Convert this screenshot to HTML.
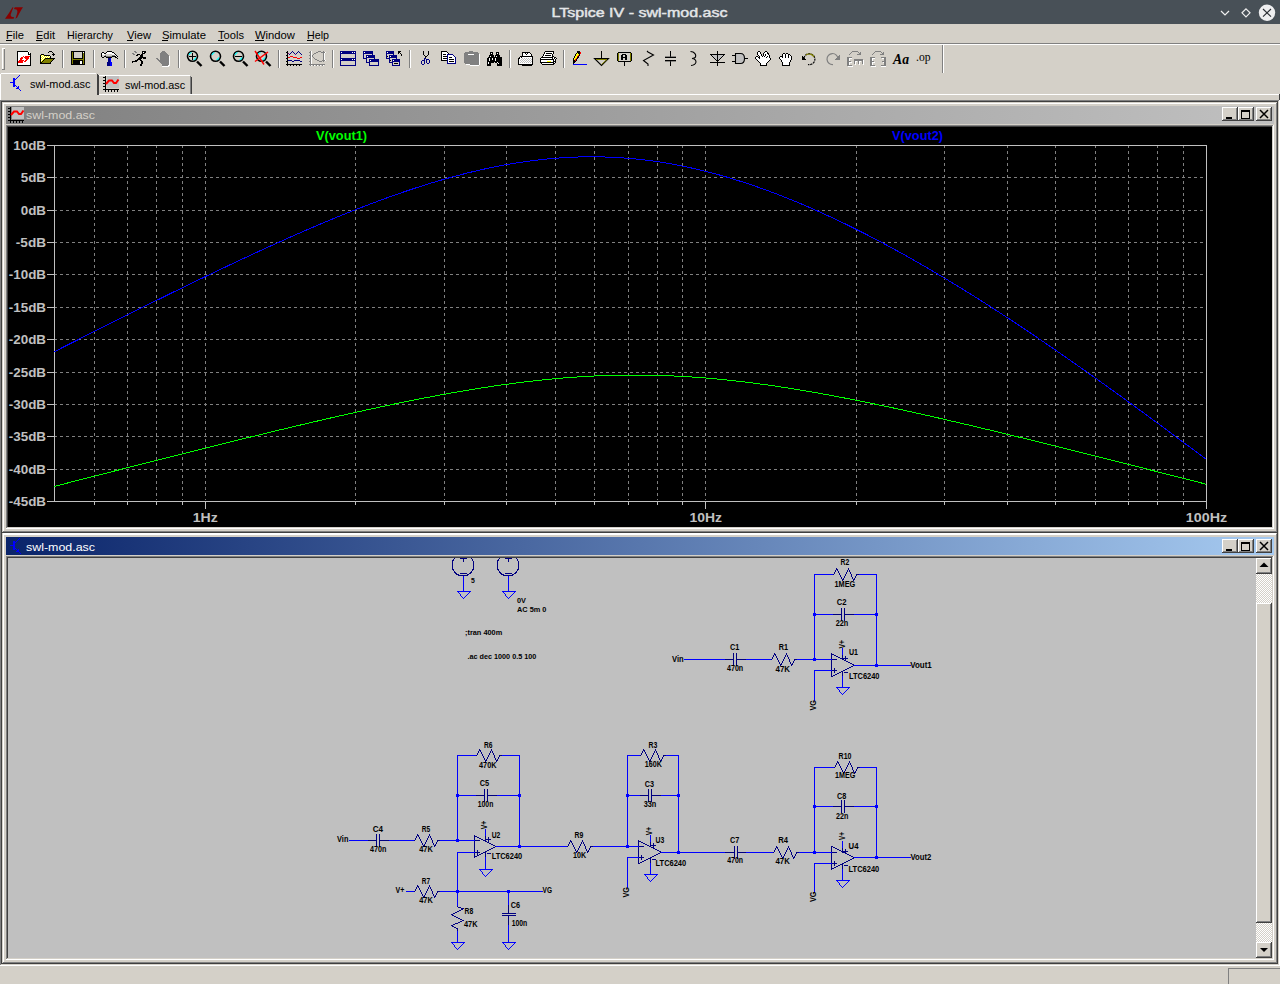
<!DOCTYPE html><html><head><meta charset="utf-8"><style>html,body{margin:0;padding:0;background:#d4d0c8;overflow:hidden}svg{display:block}text{font-family:'Liberation Sans',sans-serif}</style></head><body>
<svg width="1280" height="984" viewBox="0 0 1280 984" shape-rendering="crispEdges">
<rect x="0" y="0" width="1280" height="984" fill="#d4d0c8"/>
<rect x="0" y="0" width="1280" height="24" fill="#485057"/>
<path d="M5,18.8 L9,13 L12.5,7.2 L13.4,7.6 L11.6,12 L10.6,15 L11.2,16.5 L12.5,17 L14.2,17.3 L13.6,18.8 Z M14,8.2 L15,7.2 L23,7.2 L21.5,9.5 L19.5,13 L17.2,17.5 L15.4,18.8 L16,17 L17.2,13 L17.4,11 L16.5,9.6 L14.5,9.3 Z" fill="#880000" shape-rendering="geometricPrecision"/>
<text x="639.5" y="17" font-size="13" fill="#e4e6e8" font-weight="normal" text-anchor="middle" textLength="176" lengthAdjust="spacingAndGlyphs" stroke="#e4e6e8" stroke-width="0.45">LTspice IV - swl-mod.asc</text>
<path d="M1221,11 L1225,15 L1229,11" stroke="#f0f0f0" stroke-width="1.2" fill="none" shape-rendering="geometricPrecision"/>
<path d="M1246,8.8 L1250,12.8 L1246,16.8 L1242,12.8 Z" stroke="#f0f0f0" stroke-width="1.2" fill="none" shape-rendering="geometricPrecision"/>
<circle cx="1267" cy="12.8" r="8.2" fill="#eeeef0" shape-rendering="geometricPrecision"/>
<path d="M1263,9 L1271,16.7 M1271,9 L1263,16.7" stroke="#2a2d33" stroke-width="1.1" shape-rendering="geometricPrecision"/>
<text x="6" y="39" font-size="11.5" fill="#000" font-weight="normal" text-anchor="start" textLength="18" lengthAdjust="spacingAndGlyphs" shape-rendering="geometricPrecision">File</text>
<rect x="6" y="40" width="6" height="1" fill="#000"/>
<text x="36" y="39" font-size="11.5" fill="#000" font-weight="normal" text-anchor="start" textLength="19" lengthAdjust="spacingAndGlyphs" shape-rendering="geometricPrecision">Edit</text>
<rect x="36" y="40" width="6" height="1" fill="#000"/>
<text x="67" y="39" font-size="11.5" fill="#000" font-weight="normal" text-anchor="start" textLength="46" lengthAdjust="spacingAndGlyphs" shape-rendering="geometricPrecision">Hierarchy</text>
<rect x="78" y="40" width="2" height="1" fill="#000"/>
<text x="127" y="39" font-size="11.5" fill="#000" font-weight="normal" text-anchor="start" textLength="24" lengthAdjust="spacingAndGlyphs" shape-rendering="geometricPrecision">View</text>
<rect x="127" y="40" width="6" height="1" fill="#000"/>
<text x="162" y="39" font-size="11.5" fill="#000" font-weight="normal" text-anchor="start" textLength="44" lengthAdjust="spacingAndGlyphs" shape-rendering="geometricPrecision">Simulate</text>
<rect x="162" y="40" width="6" height="1" fill="#000"/>
<text x="218" y="39" font-size="11.5" fill="#000" font-weight="normal" text-anchor="start" textLength="26" lengthAdjust="spacingAndGlyphs" shape-rendering="geometricPrecision">Tools</text>
<rect x="218" y="40" width="6" height="1" fill="#000"/>
<text x="255" y="39" font-size="11.5" fill="#000" font-weight="normal" text-anchor="start" textLength="40" lengthAdjust="spacingAndGlyphs" shape-rendering="geometricPrecision">Window</text>
<rect x="255" y="40" width="9" height="1" fill="#000"/>
<text x="307" y="39" font-size="11.5" fill="#000" font-weight="normal" text-anchor="start" textLength="22" lengthAdjust="spacingAndGlyphs" shape-rendering="geometricPrecision">Help</text>
<rect x="307" y="40" width="6" height="1" fill="#000"/>
<rect x="0" y="43" width="1280" height="1" fill="#808080"/>
<rect x="0" y="44" width="1280" height="1" fill="#ffffff"/>
<rect x="2" y="48" width="1" height="22" fill="#ffffff"/>
<rect x="3" y="48" width="1" height="22" fill="#d4d0c8"/>
<rect x="4" y="48" width="1" height="22" fill="#808080"/>
<rect x="2" y="48" width="3" height="1" fill="#ffffff"/>
<rect x="2" y="69" width="3" height="1" fill="#808080"/>
<rect x="62" y="50" width="1" height="18" fill="#808080"/>
<rect x="63" y="50" width="1" height="18" fill="#ffffff"/>
<rect x="93" y="50" width="1" height="18" fill="#808080"/>
<rect x="94" y="50" width="1" height="18" fill="#ffffff"/>
<rect x="124" y="50" width="1" height="18" fill="#808080"/>
<rect x="125" y="50" width="1" height="18" fill="#ffffff"/>
<rect x="178" y="50" width="1" height="18" fill="#808080"/>
<rect x="179" y="50" width="1" height="18" fill="#ffffff"/>
<rect x="278" y="50" width="1" height="18" fill="#808080"/>
<rect x="279" y="50" width="1" height="18" fill="#ffffff"/>
<rect x="332" y="50" width="1" height="18" fill="#808080"/>
<rect x="333" y="50" width="1" height="18" fill="#ffffff"/>
<rect x="409" y="50" width="1" height="18" fill="#808080"/>
<rect x="410" y="50" width="1" height="18" fill="#ffffff"/>
<rect x="509" y="50" width="1" height="18" fill="#808080"/>
<rect x="510" y="50" width="1" height="18" fill="#ffffff"/>
<rect x="563" y="50" width="1" height="18" fill="#808080"/>
<rect x="564" y="50" width="1" height="18" fill="#ffffff"/>
<rect x="942" y="45" width="1" height="28" fill="#808080"/>
<rect x="943" y="45" width="1" height="28" fill="#ffffff"/>
<path fill="#000000" d="M17 51h11v1h-11z"/>
<path fill="#ffffff" d="M28 51h1v1h-1z"/>
<path fill="#000000" d="M17 52h1v1h-1z"/>
<path fill="#ffffff" d="M18 52h10v1h-10z"/>
<path fill="#000000" d="M28 52h1v1h-1z"/>
<path fill="#ffffff" d="M29 52h1v1h-1z"/>
<path fill="#000000" d="M17 53h1v1h-1z"/>
<path fill="#ffffff" d="M18 53h10v1h-10z"/>
<path fill="#000000" d="M28 53h1v1h-1z"/>
<path fill="#ffffff" d="M29 53h1v1h-1z"/>
<path fill="#000000" d="M30 53h1v1h-1z"/>
<path fill="#000000" d="M17 54h1v1h-1z"/>
<path fill="#ffffff" d="M18 54h10v1h-10z"/>
<path fill="#000000" d="M28 54h3v1h-3z"/>
<path fill="#000000" d="M17 55h1v1h-1z"/>
<path fill="#ffffff" d="M18 55h12v1h-12z"/>
<path fill="#000000" d="M30 55h1v1h-1z"/>
<path fill="#000000" d="M17 56h1v1h-1z"/>
<path fill="#ffffff" d="M18 56h5v1h-5z"/>
<path fill="#ff0000" d="M23 56h1v1h-1z"/>
<path fill="#ffffff" d="M24 56h1v1h-1z"/>
<path fill="#ff0000" d="M25 56h5v1h-5z"/>
<path fill="#000000" d="M30 56h1v1h-1z"/>
<path fill="#000000" d="M17 57h1v1h-1z"/>
<path fill="#ffffff" d="M18 57h3v1h-3z"/>
<path fill="#ff0000" d="M21 57h2v1h-2z"/>
<path fill="#ffffff" d="M23 57h1v1h-1z"/>
<path fill="#ff0000" d="M24 57h5v1h-5z"/>
<path fill="#ffffff" d="M29 57h1v1h-1z"/>
<path fill="#000000" d="M30 57h1v1h-1z"/>
<path fill="#000000" d="M17 58h1v1h-1z"/>
<path fill="#ffffff" d="M18 58h2v1h-2z"/>
<path fill="#ff0000" d="M20 58h3v1h-3z"/>
<path fill="#ffffff" d="M23 58h2v1h-2z"/>
<path fill="#ff0000" d="M25 58h4v1h-4z"/>
<path fill="#ffffff" d="M29 58h1v1h-1z"/>
<path fill="#000000" d="M30 58h1v1h-1z"/>
<path fill="#000000" d="M17 59h1v1h-1z"/>
<path fill="#ffffff" d="M18 59h2v1h-2z"/>
<path fill="#ff0000" d="M20 59h2v1h-2z"/>
<path fill="#ffffff" d="M22 59h4v1h-4z"/>
<path fill="#ff0000" d="M26 59h2v1h-2z"/>
<path fill="#ffffff" d="M28 59h2v1h-2z"/>
<path fill="#000000" d="M30 59h1v1h-1z"/>
<path fill="#000000" d="M17 60h1v1h-1z"/>
<path fill="#ffffff" d="M18 60h1v1h-1z"/>
<path fill="#ff0000" d="M19 60h5v1h-5z"/>
<path fill="#ffffff" d="M24 60h1v1h-1z"/>
<path fill="#ff0000" d="M25 60h2v1h-2z"/>
<path fill="#ffffff" d="M27 60h3v1h-3z"/>
<path fill="#000000" d="M30 60h1v1h-1z"/>
<path fill="#000000" d="M17 61h1v1h-1z"/>
<path fill="#ff0000" d="M18 61h5v1h-5z"/>
<path fill="#ffffff" d="M23 61h1v1h-1z"/>
<path fill="#ff0000" d="M24 61h2v1h-2z"/>
<path fill="#ffffff" d="M26 61h4v1h-4z"/>
<path fill="#000000" d="M30 61h1v1h-1z"/>
<path fill="#000000" d="M17 62h1v1h-1z"/>
<path fill="#ff0000" d="M18 62h5v1h-5z"/>
<path fill="#ffffff" d="M23 62h7v1h-7z"/>
<path fill="#000000" d="M30 62h1v1h-1z"/>
<path fill="#000000" d="M17 63h1v1h-1z"/>
<path fill="#ffffff" d="M18 63h12v1h-12z"/>
<path fill="#000000" d="M30 63h1v1h-1z"/>
<path fill="#000000" d="M17 64h1v1h-1z"/>
<path fill="#ffffff" d="M18 64h12v1h-12z"/>
<path fill="#000000" d="M30 64h1v1h-1z"/>
<path fill="#000000" d="M17 65h14v1h-14z"/>
<path fill="#000000" d="M49 51h3v1h-3z"/>
<path fill="#000000" d="M48 52h1v1h-1z"/>
<path fill="#000000" d="M52 52h1v1h-1z"/>
<path fill="#000000" d="M53 53h1v1h-1z"/>
<path fill="#000000" d="M41 54h3v1h-3z"/>
<path fill="#000000" d="M52 54h3v1h-3z"/>
<path fill="#000000" d="M40 55h1v1h-1z"/>
<path fill="#ffff00" d="M41 55h1v1h-1z"/>
<path fill="#ffffff" d="M42 55h1v1h-1z"/>
<path fill="#ffff00" d="M43 55h1v1h-1z"/>
<path fill="#000000" d="M44 55h6v1h-6z"/>
<path fill="#000000" d="M53 55h1v1h-1z"/>
<path fill="#000000" d="M40 56h1v1h-1z"/>
<path fill="#ffffff" d="M41 56h1v1h-1z"/>
<path fill="#ffff00" d="M42 56h1v1h-1z"/>
<path fill="#ffffff" d="M43 56h1v1h-1z"/>
<path fill="#ffff00" d="M44 56h1v1h-1z"/>
<path fill="#ffffff" d="M45 56h1v1h-1z"/>
<path fill="#ffff00" d="M46 56h1v1h-1z"/>
<path fill="#ffffff" d="M47 56h1v1h-1z"/>
<path fill="#ffff00" d="M48 56h1v1h-1z"/>
<path fill="#ffffff" d="M49 56h1v1h-1z"/>
<path fill="#000000" d="M50 56h1v1h-1z"/>
<path fill="#000000" d="M40 57h1v1h-1z"/>
<path fill="#ffff00" d="M41 57h1v1h-1z"/>
<path fill="#ffffff" d="M42 57h1v1h-1z"/>
<path fill="#ffff00" d="M43 57h1v1h-1z"/>
<path fill="#ffffff" d="M44 57h1v1h-1z"/>
<path fill="#ffff00" d="M45 57h1v1h-1z"/>
<path fill="#ffffff" d="M46 57h1v1h-1z"/>
<path fill="#ffff00" d="M47 57h1v1h-1z"/>
<path fill="#ffffff" d="M48 57h1v1h-1z"/>
<path fill="#ffff00" d="M49 57h1v1h-1z"/>
<path fill="#000000" d="M50 57h1v1h-1z"/>
<path fill="#000000" d="M40 58h1v1h-1z"/>
<path fill="#ffffff" d="M41 58h1v1h-1z"/>
<path fill="#ffff00" d="M42 58h1v1h-1z"/>
<path fill="#ffffff" d="M43 58h1v1h-1z"/>
<path fill="#ffff00" d="M44 58h1v1h-1z"/>
<path fill="#000000" d="M45 58h10v1h-10z"/>
<path fill="#000000" d="M40 59h1v1h-1z"/>
<path fill="#ffff00" d="M41 59h1v1h-1z"/>
<path fill="#ffffff" d="M42 59h1v1h-1z"/>
<path fill="#ffff00" d="M43 59h1v1h-1z"/>
<path fill="#000000" d="M44 59h1v1h-1z"/>
<path fill="#808000" d="M45 59h8v1h-8z"/>
<path fill="#000000" d="M53 59h1v1h-1z"/>
<path fill="#000000" d="M40 60h1v1h-1z"/>
<path fill="#ffffff" d="M41 60h1v1h-1z"/>
<path fill="#ffff00" d="M42 60h1v1h-1z"/>
<path fill="#000000" d="M43 60h1v1h-1z"/>
<path fill="#808000" d="M44 60h8v1h-8z"/>
<path fill="#000000" d="M52 60h1v1h-1z"/>
<path fill="#000000" d="M40 61h1v1h-1z"/>
<path fill="#ffff00" d="M41 61h1v1h-1z"/>
<path fill="#000000" d="M42 61h1v1h-1z"/>
<path fill="#808000" d="M43 61h8v1h-8z"/>
<path fill="#000000" d="M51 61h1v1h-1z"/>
<path fill="#000000" d="M40 62h2v1h-2z"/>
<path fill="#808000" d="M42 62h8v1h-8z"/>
<path fill="#000000" d="M50 62h1v1h-1z"/>
<path fill="#000000" d="M40 63h11v1h-11z"/>
<path fill="#000000" d="M71 51h14v1h-14z"/>
<path fill="#000000" d="M71 52h1v1h-1z"/>
<path fill="#808000" d="M72 52h1v1h-1z"/>
<path fill="#000000" d="M73 52h1v1h-1z"/>
<path fill="#d4d0c8" d="M74 52h8v1h-8z"/>
<path fill="#000000" d="M82 52h1v1h-1z"/>
<path fill="#ffffff" d="M83 52h1v1h-1z"/>
<path fill="#000000" d="M84 52h1v1h-1z"/>
<path fill="#000000" d="M71 53h1v1h-1z"/>
<path fill="#808000" d="M72 53h1v1h-1z"/>
<path fill="#000000" d="M73 53h1v1h-1z"/>
<path fill="#d4d0c8" d="M74 53h8v1h-8z"/>
<path fill="#000000" d="M82 53h1v1h-1z"/>
<path fill="#808000" d="M83 53h1v1h-1z"/>
<path fill="#000000" d="M84 53h1v1h-1z"/>
<path fill="#000000" d="M71 54h1v1h-1z"/>
<path fill="#808000" d="M72 54h1v1h-1z"/>
<path fill="#000000" d="M73 54h1v1h-1z"/>
<path fill="#d4d0c8" d="M74 54h8v1h-8z"/>
<path fill="#000000" d="M82 54h1v1h-1z"/>
<path fill="#808000" d="M83 54h1v1h-1z"/>
<path fill="#000000" d="M84 54h1v1h-1z"/>
<path fill="#000000" d="M71 55h1v1h-1z"/>
<path fill="#808000" d="M72 55h1v1h-1z"/>
<path fill="#000000" d="M73 55h1v1h-1z"/>
<path fill="#d4d0c8" d="M74 55h8v1h-8z"/>
<path fill="#000000" d="M82 55h1v1h-1z"/>
<path fill="#808000" d="M83 55h1v1h-1z"/>
<path fill="#000000" d="M84 55h1v1h-1z"/>
<path fill="#000000" d="M71 56h1v1h-1z"/>
<path fill="#808000" d="M72 56h1v1h-1z"/>
<path fill="#000000" d="M73 56h1v1h-1z"/>
<path fill="#d4d0c8" d="M74 56h8v1h-8z"/>
<path fill="#000000" d="M82 56h1v1h-1z"/>
<path fill="#808000" d="M83 56h1v1h-1z"/>
<path fill="#000000" d="M84 56h1v1h-1z"/>
<path fill="#000000" d="M71 57h1v1h-1z"/>
<path fill="#808000" d="M72 57h1v1h-1z"/>
<path fill="#000000" d="M73 57h1v1h-1z"/>
<path fill="#d4d0c8" d="M74 57h8v1h-8z"/>
<path fill="#000000" d="M82 57h1v1h-1z"/>
<path fill="#808000" d="M83 57h1v1h-1z"/>
<path fill="#000000" d="M84 57h1v1h-1z"/>
<path fill="#000000" d="M71 58h1v1h-1z"/>
<path fill="#808000" d="M72 58h1v1h-1z"/>
<path fill="#000000" d="M73 58h10v1h-10z"/>
<path fill="#808000" d="M83 58h1v1h-1z"/>
<path fill="#000000" d="M84 58h1v1h-1z"/>
<path fill="#000000" d="M71 59h1v1h-1z"/>
<path fill="#808000" d="M72 59h12v1h-12z"/>
<path fill="#000000" d="M84 59h1v1h-1z"/>
<path fill="#000000" d="M71 60h1v1h-1z"/>
<path fill="#808000" d="M72 60h1v1h-1z"/>
<path fill="#000000" d="M73 60h10v1h-10z"/>
<path fill="#808000" d="M83 60h1v1h-1z"/>
<path fill="#000000" d="M84 60h1v1h-1z"/>
<path fill="#000000" d="M71 61h1v1h-1z"/>
<path fill="#808000" d="M72 61h1v1h-1z"/>
<path fill="#000000" d="M73 61h7v1h-7z"/>
<path fill="#ffffff" d="M80 61h2v1h-2z"/>
<path fill="#000000" d="M82 61h1v1h-1z"/>
<path fill="#808000" d="M83 61h1v1h-1z"/>
<path fill="#000000" d="M84 61h1v1h-1z"/>
<path fill="#000000" d="M71 62h1v1h-1z"/>
<path fill="#808000" d="M72 62h1v1h-1z"/>
<path fill="#000000" d="M73 62h7v1h-7z"/>
<path fill="#ffffff" d="M80 62h2v1h-2z"/>
<path fill="#000000" d="M82 62h1v1h-1z"/>
<path fill="#808000" d="M83 62h1v1h-1z"/>
<path fill="#000000" d="M84 62h1v1h-1z"/>
<path fill="#000000" d="M71 63h1v1h-1z"/>
<path fill="#808000" d="M72 63h1v1h-1z"/>
<path fill="#000000" d="M73 63h7v1h-7z"/>
<path fill="#ffffff" d="M80 63h2v1h-2z"/>
<path fill="#000000" d="M82 63h1v1h-1z"/>
<path fill="#808000" d="M83 63h1v1h-1z"/>
<path fill="#000000" d="M84 63h1v1h-1z"/>
<path fill="#000000" d="M71 64h14v1h-14z"/>
<path fill="#000000" d="M107 51h5v1h-5z"/>
<path fill="#000000" d="M102 52h2v1h-2z"/>
<path fill="#000000" d="M106 52h1v1h-1z"/>
<path fill="#ffffff" d="M107 52h5v1h-5z"/>
<path fill="#000000" d="M112 52h2v1h-2z"/>
<path fill="#000000" d="M101 53h1v1h-1z"/>
<path fill="#ffffff" d="M102 53h2v1h-2z"/>
<path fill="#000000" d="M104 53h2v1h-2z"/>
<path fill="#ffffff" d="M106 53h8v1h-8z"/>
<path fill="#000000" d="M114 53h1v1h-1z"/>
<path fill="#000000" d="M101 54h1v1h-1z"/>
<path fill="#ffffff" d="M102 54h3v1h-3z"/>
<path fill="#d4d0c8" d="M105 54h7v1h-7z"/>
<path fill="#ffffff" d="M112 54h3v1h-3z"/>
<path fill="#000000" d="M115 54h1v1h-1z"/>
<path fill="#000000" d="M101 55h1v1h-1z"/>
<path fill="#d4d0c8" d="M102 55h3v1h-3z"/>
<path fill="#808080" d="M105 55h1v1h-1z"/>
<path fill="#d4d0c8" d="M106 55h6v1h-6z"/>
<path fill="#808080" d="M112 55h3v1h-3z"/>
<path fill="#ffffff" d="M115 55h1v1h-1z"/>
<path fill="#000000" d="M116 55h1v1h-1z"/>
<path fill="#000000" d="M101 56h1v1h-1z"/>
<path fill="#d4d0c8" d="M102 56h2v1h-2z"/>
<path fill="#000000" d="M104 56h2v1h-2z"/>
<path fill="#808080" d="M106 56h6v1h-6z"/>
<path fill="#000000" d="M112 56h4v1h-4z"/>
<path fill="#ffffff" d="M116 56h1v1h-1z"/>
<path fill="#000000" d="M117 56h1v1h-1z"/>
<path fill="#000000" d="M102 57h2v1h-2z"/>
<path fill="#000000" d="M106 57h6v1h-6z"/>
<path fill="#000000" d="M115 57h2v1h-2z"/>
<path fill="#000080" d="M108 58h2v1h-2z"/>
<path fill="#0000ff" d="M110 58h1v1h-1z"/>
<path fill="#000000" d="M117 58h1v1h-1z"/>
<path fill="#000080" d="M108 59h2v1h-2z"/>
<path fill="#0000ff" d="M110 59h1v1h-1z"/>
<path fill="#000080" d="M108 60h2v1h-2z"/>
<path fill="#0000ff" d="M110 60h1v1h-1z"/>
<path fill="#000080" d="M108 61h2v1h-2z"/>
<path fill="#0000ff" d="M110 61h1v1h-1z"/>
<path fill="#000080" d="M107 62h3v1h-3z"/>
<path fill="#0000ff" d="M110 62h2v1h-2z"/>
<path fill="#000080" d="M107 63h3v1h-3z"/>
<path fill="#0000ff" d="M110 63h2v1h-2z"/>
<path fill="#000080" d="M107 64h3v1h-3z"/>
<path fill="#0000ff" d="M110 64h2v1h-2z"/>
<path fill="#000080" d="M107 65h3v1h-3z"/>
<path fill="#0000ff" d="M110 65h2v1h-2z"/>
<path fill="#808080" d="M134 51h2v1h-2z"/>
<path fill="#000000" d="M142 51h4v1h-4z"/>
<path fill="#808080" d="M135 52h2v1h-2z"/>
<path fill="#000000" d="M142 52h1v1h-1z"/>
<path fill="#ffffff" d="M143 52h1v1h-1z"/>
<path fill="#000000" d="M144 52h2v1h-2z"/>
<path fill="#808080" d="M132 53h2v1h-2z"/>
<path fill="#000000" d="M142 53h3v1h-3z"/>
<path fill="#808080" d="M133 54h2v1h-2z"/>
<path fill="#000000" d="M137 54h3v1h-3z"/>
<path fill="#000000" d="M141 54h2v1h-2z"/>
<path fill="#000000" d="M136 55h2v1h-2z"/>
<path fill="#000000" d="M140 55h3v1h-3z"/>
<path fill="#000000" d="M140 56h3v1h-3z"/>
<path fill="#000000" d="M139 57h7v1h-7z"/>
<path fill="#000000" d="M138 58h4v1h-4z"/>
<path fill="#000000" d="M143 58h3v1h-3z"/>
<path fill="#000000" d="M137 59h4v1h-4z"/>
<path fill="#000000" d="M135 60h3v1h-3z"/>
<path fill="#000000" d="M140 60h2v1h-2z"/>
<path fill="#000000" d="M132 61h5v1h-5z"/>
<path fill="#000000" d="M141 61h2v1h-2z"/>
<path fill="#000000" d="M132 62h1v1h-1z"/>
<path fill="#000000" d="M141 62h2v1h-2z"/>
<path fill="#000000" d="M141 63h2v1h-2z"/>
<path fill="#000000" d="M140 64h2v1h-2z"/>
<path fill="#000000" d="M140 65h2v1h-2z"/>
<path fill="#808080" d="M162 51h3v1h-3z"/>
<path fill="#808080" d="M161 52h5v1h-5z"/>
<path fill="#808080" d="M160 53h7v1h-7z"/>
<path fill="#808080" d="M160 54h8v1h-8z"/>
<path fill="#808080" d="M160 55h9v1h-9z"/>
<path fill="#808080" d="M160 56h9v1h-9z"/>
<path fill="#ffffff" d="M169 56h1v1h-1z"/>
<path fill="#808080" d="M160 57h9v1h-9z"/>
<path fill="#ffffff" d="M169 57h1v1h-1z"/>
<path fill="#808080" d="M156 58h2v1h-2z"/>
<path fill="#808080" d="M160 58h9v1h-9z"/>
<path fill="#ffffff" d="M169 58h1v1h-1z"/>
<path fill="#808080" d="M157 59h2v1h-2z"/>
<path fill="#808080" d="M160 59h9v1h-9z"/>
<path fill="#ffffff" d="M169 59h1v1h-1z"/>
<path fill="#808080" d="M158 60h11v1h-11z"/>
<path fill="#ffffff" d="M169 60h1v1h-1z"/>
<path fill="#808080" d="M159 61h10v1h-10z"/>
<path fill="#ffffff" d="M169 61h1v1h-1z"/>
<path fill="#808080" d="M160 62h9v1h-9z"/>
<path fill="#ffffff" d="M169 62h1v1h-1z"/>
<path fill="#808080" d="M161 63h8v1h-8z"/>
<path fill="#ffffff" d="M169 63h1v1h-1z"/>
<path fill="#808080" d="M162 64h7v1h-7z"/>
<path fill="#ffffff" d="M169 64h1v1h-1z"/>
<path fill="#808080" d="M162 65h6v1h-6z"/>
<path fill="#ffffff" d="M168 65h2v1h-2z"/>
<path fill="#ffffff" d="M162 66h7v1h-7z"/>
<g shape-rendering="geometricPrecision"><circle cx="192.5" cy="56.3" r="5" fill="none" stroke="#000" stroke-width="1.6"/><path d="M189.0,55 A4,4 0 0 1 191.5,52.5 M196.0,57.5 A4,4 0 0 1 193.5,60" stroke="#00ffff" stroke-width="1.2" fill="none"/><path d="M197.0,61.5 L201.5,66" stroke="#000" stroke-width="2.4"/></g>
<rect x="189" y="56" width="7" height="1" fill="#000"/><rect x="192" y="53" width="1" height="7" fill="#000"/>
<g shape-rendering="geometricPrecision"><circle cx="215.5" cy="56.3" r="5" fill="none" stroke="#000" stroke-width="1.6"/><path d="M212.0,55 A4,4 0 0 1 214.5,52.5 M219.0,57.5 A4,4 0 0 1 216.5,60" stroke="#00ffff" stroke-width="1.2" fill="none"/><path d="M220.0,61.5 L224.5,66" stroke="#000" stroke-width="2.4"/></g>
<g shape-rendering="geometricPrecision"><circle cx="238.5" cy="56.3" r="5" fill="none" stroke="#000" stroke-width="1.6"/><path d="M235.0,55 A4,4 0 0 1 237.5,52.5 M242.0,57.5 A4,4 0 0 1 239.5,60" stroke="#00ffff" stroke-width="1.2" fill="none"/><path d="M243.0,61.5 L247.5,66" stroke="#000" stroke-width="2.4"/></g>
<rect x="235" y="56" width="7" height="1" fill="#000"/>
<g shape-rendering="geometricPrecision"><circle cx="261.5" cy="56.3" r="5" fill="none" stroke="#000" stroke-width="1.6"/><path d="M258.0,55 A4,4 0 0 1 260.5,52.5 M265.0,57.5 A4,4 0 0 1 262.5,60" stroke="#00ffff" stroke-width="1.2" fill="none"/><path d="M266.0,61.5 L270.5,66" stroke="#000" stroke-width="2.4"/></g>
<path d="M255,51 L264,64.5 M268,52 L255,61.5" stroke="#ff0000" stroke-width="1.5" shape-rendering="geometricPrecision"/>
<path fill="#000000" d="M287 51h1v1h-1z"/>
<path fill="#000080" d="M292 51h1v1h-1z"/>
<path fill="#000080" d="M298 51h1v1h-1z"/>
<path fill="#000000" d="M286 52h2v1h-2z"/>
<path fill="#000080" d="M291 52h1v1h-1z"/>
<path fill="#000080" d="M293 52h1v1h-1z"/>
<path fill="#000080" d="M297 52h1v1h-1z"/>
<path fill="#000080" d="M299 52h1v1h-1z"/>
<path fill="#000000" d="M287 53h1v1h-1z"/>
<path fill="#800080" d="M288 53h1v1h-1z"/>
<path fill="#000080" d="M290 53h1v1h-1z"/>
<path fill="#000080" d="M294 53h1v1h-1z"/>
<path fill="#000080" d="M296 53h1v1h-1z"/>
<path fill="#000080" d="M300 53h1v1h-1z"/>
<path fill="#000000" d="M287 54h1v1h-1z"/>
<path fill="#000080" d="M289 54h1v1h-1z"/>
<path fill="#800080" d="M295 54h1v1h-1z"/>
<path fill="#000080" d="M301 54h1v1h-1z"/>
<path fill="#000000" d="M286 55h2v1h-2z"/>
<path fill="#000000" d="M287 56h1v1h-1z"/>
<path fill="#ff0000" d="M290 56h3v1h-3z"/>
<path fill="#000000" d="M287 57h1v1h-1z"/>
<path fill="#ff0000" d="M288 57h2v1h-2z"/>
<path fill="#ff0000" d="M293 57h4v1h-4z"/>
<path fill="#ff0000" d="M300 57h2v1h-2z"/>
<path fill="#000000" d="M286 58h2v1h-2z"/>
<path fill="#ff0000" d="M297 58h3v1h-3z"/>
<path fill="#000000" d="M287 59h1v1h-1z"/>
<path fill="#000000" d="M287 60h1v1h-1z"/>
<path fill="#000080" d="M288 60h4v1h-4z"/>
<path fill="#000080" d="M294 60h6v1h-6z"/>
<path fill="#000000" d="M286 61h2v1h-2z"/>
<path fill="#000080" d="M292 61h2v1h-2z"/>
<path fill="#000080" d="M300 61h2v1h-2z"/>
<path fill="#000000" d="M287 62h1v1h-1z"/>
<path fill="#000000" d="M287 63h1v1h-1z"/>
<path fill="#000000" d="M286 64h16v1h-16z"/>
<path fill="#000000" d="M287 65h1v1h-1z"/>
<path fill="#000000" d="M290 65h1v1h-1z"/>
<path fill="#000000" d="M293 65h1v1h-1z"/>
<path fill="#000000" d="M296 65h1v1h-1z"/>
<path fill="#000000" d="M299 65h1v1h-1z"/>
<path fill="#808080" d="M310 51h1v1h-1z"/>
<path fill="#ffffff" d="M311 51h1v1h-1z"/>
<path fill="#808080" d="M318 51h3v1h-3z"/>
<path fill="#808080" d="M323 51h1v1h-1z"/>
<path fill="#808080" d="M309 52h2v1h-2z"/>
<path fill="#ffffff" d="M311 52h1v1h-1z"/>
<path fill="#808080" d="M316 52h2v1h-2z"/>
<path fill="#808080" d="M321 52h4v1h-4z"/>
<path fill="#ffffff" d="M325 52h1v1h-1z"/>
<path fill="#808080" d="M310 53h1v1h-1z"/>
<path fill="#ffffff" d="M311 53h1v1h-1z"/>
<path fill="#808080" d="M314 53h2v1h-2z"/>
<path fill="#808080" d="M323 53h1v1h-1z"/>
<path fill="#ffffff" d="M324 53h1v1h-1z"/>
<path fill="#808080" d="M310 54h1v1h-1z"/>
<path fill="#ffffff" d="M311 54h1v1h-1z"/>
<path fill="#808080" d="M313 54h1v1h-1z"/>
<path fill="#808080" d="M323 54h1v1h-1z"/>
<path fill="#ffffff" d="M324 54h1v1h-1z"/>
<path fill="#808080" d="M309 55h2v1h-2z"/>
<path fill="#ffffff" d="M311 55h1v1h-1z"/>
<path fill="#808080" d="M312 55h1v1h-1z"/>
<path fill="#808080" d="M323 55h1v1h-1z"/>
<path fill="#ffffff" d="M324 55h1v1h-1z"/>
<path fill="#808080" d="M310 56h1v1h-1z"/>
<path fill="#ffffff" d="M311 56h1v1h-1z"/>
<path fill="#808080" d="M312 56h1v1h-1z"/>
<path fill="#808080" d="M323 56h1v1h-1z"/>
<path fill="#ffffff" d="M324 56h1v1h-1z"/>
<path fill="#808080" d="M310 57h1v1h-1z"/>
<path fill="#ffffff" d="M311 57h1v1h-1z"/>
<path fill="#808080" d="M313 57h1v1h-1z"/>
<path fill="#808080" d="M323 57h1v1h-1z"/>
<path fill="#ffffff" d="M324 57h1v1h-1z"/>
<path fill="#808080" d="M309 58h2v1h-2z"/>
<path fill="#ffffff" d="M311 58h1v1h-1z"/>
<path fill="#808080" d="M314 58h1v1h-1z"/>
<path fill="#808080" d="M323 58h1v1h-1z"/>
<path fill="#ffffff" d="M324 58h1v1h-1z"/>
<path fill="#808080" d="M310 59h1v1h-1z"/>
<path fill="#ffffff" d="M311 59h1v1h-1z"/>
<path fill="#808080" d="M315 59h2v1h-2z"/>
<path fill="#808080" d="M323 59h1v1h-1z"/>
<path fill="#ffffff" d="M324 59h1v1h-1z"/>
<path fill="#808080" d="M310 60h1v1h-1z"/>
<path fill="#ffffff" d="M311 60h1v1h-1z"/>
<path fill="#808080" d="M317 60h2v1h-2z"/>
<path fill="#808080" d="M322 60h3v1h-3z"/>
<path fill="#ffffff" d="M325 60h1v1h-1z"/>
<path fill="#808080" d="M309 61h2v1h-2z"/>
<path fill="#ffffff" d="M311 61h1v1h-1z"/>
<path fill="#808080" d="M319 61h3v1h-3z"/>
<path fill="#808080" d="M323 61h1v1h-1z"/>
<path fill="#808080" d="M310 62h1v1h-1z"/>
<path fill="#ffffff" d="M311 62h1v1h-1z"/>
<path fill="#808080" d="M310 63h1v1h-1z"/>
<path fill="#ffffff" d="M311 63h1v1h-1z"/>
<path fill="#808080" d="M309 64h16v1h-16z"/>
<path fill="#808080" d="M310 65h1v1h-1z"/>
<path fill="#ffffff" d="M311 65h1v1h-1z"/>
<path fill="#808080" d="M313 65h1v1h-1z"/>
<path fill="#ffffff" d="M314 65h1v1h-1z"/>
<path fill="#808080" d="M316 65h1v1h-1z"/>
<path fill="#ffffff" d="M317 65h1v1h-1z"/>
<path fill="#808080" d="M319 65h1v1h-1z"/>
<path fill="#ffffff" d="M320 65h1v1h-1z"/>
<path fill="#808080" d="M322 65h1v1h-1z"/>
<path fill="#ffffff" d="M323 65h1v1h-1z"/>
<path fill="#000080" d="M340 51h16v1h-16z"/>
<path fill="#000080" d="M340 52h1v1h-1z"/>
<path fill="#ffffff" d="M341 52h1v1h-1z"/>
<path fill="#000080" d="M342 52h10v1h-10z"/>
<path fill="#ffffff" d="M352 52h1v1h-1z"/>
<path fill="#000080" d="M353 52h1v1h-1z"/>
<path fill="#ffffff" d="M354 52h1v1h-1z"/>
<path fill="#000080" d="M355 52h1v1h-1z"/>
<path fill="#000080" d="M340 53h16v1h-16z"/>
<path fill="#000080" d="M340 54h1v1h-1z"/>
<path fill="#d4d0c8" d="M341 54h14v1h-14z"/>
<path fill="#000080" d="M355 54h1v1h-1z"/>
<path fill="#000080" d="M340 55h1v1h-1z"/>
<path fill="#d4d0c8" d="M341 55h14v1h-14z"/>
<path fill="#000080" d="M355 55h1v1h-1z"/>
<path fill="#000080" d="M340 56h1v1h-1z"/>
<path fill="#d4d0c8" d="M341 56h14v1h-14z"/>
<path fill="#000080" d="M355 56h1v1h-1z"/>
<path fill="#000080" d="M340 57h1v1h-1z"/>
<path fill="#d4d0c8" d="M341 57h14v1h-14z"/>
<path fill="#000080" d="M355 57h1v1h-1z"/>
<path fill="#000080" d="M340 58h16v1h-16z"/>
<path fill="#000080" d="M340 59h1v1h-1z"/>
<path fill="#ffffff" d="M341 59h1v1h-1z"/>
<path fill="#000080" d="M342 59h10v1h-10z"/>
<path fill="#ffffff" d="M352 59h1v1h-1z"/>
<path fill="#000080" d="M353 59h1v1h-1z"/>
<path fill="#ffffff" d="M354 59h1v1h-1z"/>
<path fill="#000080" d="M355 59h1v1h-1z"/>
<path fill="#000080" d="M340 60h16v1h-16z"/>
<path fill="#000080" d="M340 61h1v1h-1z"/>
<path fill="#d4d0c8" d="M341 61h14v1h-14z"/>
<path fill="#000080" d="M355 61h1v1h-1z"/>
<path fill="#000080" d="M340 62h1v1h-1z"/>
<path fill="#d4d0c8" d="M341 62h14v1h-14z"/>
<path fill="#000080" d="M355 62h1v1h-1z"/>
<path fill="#000080" d="M340 63h1v1h-1z"/>
<path fill="#d4d0c8" d="M341 63h14v1h-14z"/>
<path fill="#000080" d="M355 63h1v1h-1z"/>
<path fill="#000080" d="M340 64h1v1h-1z"/>
<path fill="#d4d0c8" d="M341 64h14v1h-14z"/>
<path fill="#000080" d="M355 64h1v1h-1z"/>
<path fill="#000080" d="M340 65h16v1h-16z"/>
<path fill="#000080" d="M363 51h10v1h-10z"/>
<path fill="#000080" d="M363 52h1v1h-1z"/>
<path fill="#ffffff" d="M364 52h1v1h-1z"/>
<path fill="#000080" d="M365 52h8v1h-8z"/>
<path fill="#000080" d="M363 53h10v1h-10z"/>
<path fill="#000080" d="M363 54h1v1h-1z"/>
<path fill="#d4d0c8" d="M364 54h8v1h-8z"/>
<path fill="#000080" d="M372 54h1v1h-1z"/>
<path fill="#000080" d="M363 55h1v1h-1z"/>
<path fill="#d4d0c8" d="M364 55h2v1h-2z"/>
<path fill="#000080" d="M366 55h9v1h-9z"/>
<path fill="#000080" d="M363 56h1v1h-1z"/>
<path fill="#d4d0c8" d="M364 56h2v1h-2z"/>
<path fill="#000080" d="M366 56h1v1h-1z"/>
<path fill="#ffffff" d="M367 56h1v1h-1z"/>
<path fill="#000080" d="M368 56h7v1h-7z"/>
<path fill="#000080" d="M363 57h1v1h-1z"/>
<path fill="#d4d0c8" d="M364 57h2v1h-2z"/>
<path fill="#000080" d="M366 57h9v1h-9z"/>
<path fill="#000080" d="M363 58h4v1h-4z"/>
<path fill="#d4d0c8" d="M367 58h7v1h-7z"/>
<path fill="#000080" d="M374 58h1v1h-1z"/>
<path fill="#000080" d="M366 59h1v1h-1z"/>
<path fill="#d4d0c8" d="M367 59h2v1h-2z"/>
<path fill="#000080" d="M369 59h10v1h-10z"/>
<path fill="#000080" d="M366 60h1v1h-1z"/>
<path fill="#d4d0c8" d="M367 60h2v1h-2z"/>
<path fill="#000080" d="M369 60h1v1h-1z"/>
<path fill="#ffffff" d="M370 60h1v1h-1z"/>
<path fill="#000080" d="M371 60h8v1h-8z"/>
<path fill="#000080" d="M366 61h1v1h-1z"/>
<path fill="#d4d0c8" d="M367 61h2v1h-2z"/>
<path fill="#000080" d="M369 61h10v1h-10z"/>
<path fill="#000080" d="M366 62h4v1h-4z"/>
<path fill="#d4d0c8" d="M370 62h8v1h-8z"/>
<path fill="#000080" d="M378 62h1v1h-1z"/>
<path fill="#000080" d="M369 63h1v1h-1z"/>
<path fill="#d4d0c8" d="M370 63h8v1h-8z"/>
<path fill="#000080" d="M378 63h1v1h-1z"/>
<path fill="#000080" d="M369 64h1v1h-1z"/>
<path fill="#d4d0c8" d="M370 64h8v1h-8z"/>
<path fill="#000080" d="M378 64h1v1h-1z"/>
<path fill="#000080" d="M369 65h10v1h-10z"/>
<path fill="#000080" d="M386 51h8v1h-8z"/>
<path fill="#000000" d="M398 51h3v1h-3z"/>
<path fill="#000080" d="M386 52h1v1h-1z"/>
<path fill="#ffffff" d="M387 52h1v1h-1z"/>
<path fill="#000080" d="M388 52h6v1h-6z"/>
<path fill="#000000" d="M398 52h2v1h-2z"/>
<path fill="#000080" d="M386 53h8v1h-8z"/>
<path fill="#000000" d="M398 53h1v1h-1z"/>
<path fill="#000000" d="M400 53h1v1h-1z"/>
<path fill="#000080" d="M386 54h1v1h-1z"/>
<path fill="#d4d0c8" d="M387 54h6v1h-6z"/>
<path fill="#000080" d="M393 54h1v1h-1z"/>
<path fill="#000000" d="M401 54h1v1h-1z"/>
<path fill="#000080" d="M386 55h1v1h-1z"/>
<path fill="#d4d0c8" d="M387 55h2v1h-2z"/>
<path fill="#000080" d="M389 55h8v1h-8z"/>
<path fill="#000000" d="M401 55h1v1h-1z"/>
<path fill="#000080" d="M386 56h1v1h-1z"/>
<path fill="#000000" d="M387 56h1v1h-1z"/>
<path fill="#d4d0c8" d="M388 56h1v1h-1z"/>
<path fill="#000080" d="M389 56h1v1h-1z"/>
<path fill="#ffffff" d="M390 56h1v1h-1z"/>
<path fill="#000080" d="M391 56h6v1h-6z"/>
<path fill="#000080" d="M386 57h1v1h-1z"/>
<path fill="#d4d0c8" d="M387 57h2v1h-2z"/>
<path fill="#000080" d="M389 57h8v1h-8z"/>
<path fill="#000080" d="M386 58h4v1h-4z"/>
<path fill="#d4d0c8" d="M390 58h6v1h-6z"/>
<path fill="#000080" d="M396 58h1v1h-1z"/>
<path fill="#000080" d="M389 59h1v1h-1z"/>
<path fill="#d4d0c8" d="M390 59h2v1h-2z"/>
<path fill="#000080" d="M392 59h8v1h-8z"/>
<path fill="#000080" d="M389 60h1v1h-1z"/>
<path fill="#000000" d="M390 60h1v1h-1z"/>
<path fill="#d4d0c8" d="M391 60h1v1h-1z"/>
<path fill="#000080" d="M392 60h1v1h-1z"/>
<path fill="#ffffff" d="M393 60h1v1h-1z"/>
<path fill="#000080" d="M394 60h6v1h-6z"/>
<path fill="#000080" d="M389 61h1v1h-1z"/>
<path fill="#d4d0c8" d="M390 61h2v1h-2z"/>
<path fill="#000080" d="M392 61h8v1h-8z"/>
<path fill="#000080" d="M389 62h4v1h-4z"/>
<path fill="#d4d0c8" d="M393 62h6v1h-6z"/>
<path fill="#000080" d="M399 62h1v1h-1z"/>
<path fill="#000080" d="M392 63h1v1h-1z"/>
<path fill="#d4d0c8" d="M393 63h1v1h-1z"/>
<path fill="#000000" d="M394 63h4v1h-4z"/>
<path fill="#d4d0c8" d="M398 63h1v1h-1z"/>
<path fill="#000080" d="M399 63h1v1h-1z"/>
<path fill="#000080" d="M392 64h1v1h-1z"/>
<path fill="#d4d0c8" d="M393 64h6v1h-6z"/>
<path fill="#000080" d="M399 64h1v1h-1z"/>
<path fill="#000080" d="M392 65h8v1h-8z"/>
<path fill="#000000" d="M423 51h1v1h-1z"/>
<path fill="#000000" d="M428 51h1v1h-1z"/>
<path fill="#000000" d="M423 52h1v1h-1z"/>
<path fill="#000000" d="M428 52h1v1h-1z"/>
<path fill="#000000" d="M423 53h1v1h-1z"/>
<path fill="#000000" d="M428 53h1v1h-1z"/>
<path fill="#000000" d="M423 54h1v1h-1z"/>
<path fill="#000000" d="M428 54h1v1h-1z"/>
<path fill="#000000" d="M424 55h1v1h-1z"/>
<path fill="#000000" d="M427 55h1v1h-1z"/>
<path fill="#000000" d="M425 56h2v1h-2z"/>
<path fill="#000000" d="M425 57h1v1h-1z"/>
<path fill="#000080" d="M424 58h2v1h-2z"/>
<path fill="#000080" d="M424 59h1v1h-1z"/>
<path fill="#000080" d="M426 59h3v1h-3z"/>
<path fill="#000080" d="M422 60h3v1h-3z"/>
<path fill="#000080" d="M426 60h1v1h-1z"/>
<path fill="#000080" d="M429 60h1v1h-1z"/>
<path fill="#000080" d="M421 61h1v1h-1z"/>
<path fill="#000080" d="M424 61h1v1h-1z"/>
<path fill="#000080" d="M426 61h1v1h-1z"/>
<path fill="#000080" d="M429 61h1v1h-1z"/>
<path fill="#000080" d="M421 62h1v1h-1z"/>
<path fill="#000080" d="M424 62h1v1h-1z"/>
<path fill="#000080" d="M426 62h1v1h-1z"/>
<path fill="#000080" d="M429 62h1v1h-1z"/>
<path fill="#000080" d="M421 63h1v1h-1z"/>
<path fill="#000080" d="M424 63h1v1h-1z"/>
<path fill="#000080" d="M427 63h2v1h-2z"/>
<path fill="#000080" d="M422 64h2v1h-2z"/>
<path fill="#000000" d="M441 51h6v1h-6z"/>
<path fill="#000000" d="M441 52h1v1h-1z"/>
<path fill="#ffffff" d="M442 52h5v1h-5z"/>
<path fill="#000000" d="M447 52h1v1h-1z"/>
<path fill="#000000" d="M441 53h1v1h-1z"/>
<path fill="#ffffff" d="M442 53h6v1h-6z"/>
<path fill="#000000" d="M448 53h1v1h-1z"/>
<path fill="#000000" d="M441 54h1v1h-1z"/>
<path fill="#ffffff" d="M442 54h1v1h-1z"/>
<path fill="#000000" d="M443 54h3v1h-3z"/>
<path fill="#ffffff" d="M446 54h1v1h-1z"/>
<path fill="#000080" d="M447 54h6v1h-6z"/>
<path fill="#000000" d="M441 55h1v1h-1z"/>
<path fill="#ffffff" d="M442 55h5v1h-5z"/>
<path fill="#000080" d="M447 55h1v1h-1z"/>
<path fill="#ffffff" d="M448 55h5v1h-5z"/>
<path fill="#000080" d="M453 55h1v1h-1z"/>
<path fill="#000000" d="M441 56h1v1h-1z"/>
<path fill="#ffffff" d="M442 56h1v1h-1z"/>
<path fill="#000000" d="M443 56h4v1h-4z"/>
<path fill="#000080" d="M447 56h1v1h-1z"/>
<path fill="#ffffff" d="M448 56h6v1h-6z"/>
<path fill="#000080" d="M454 56h1v1h-1z"/>
<path fill="#000000" d="M441 57h1v1h-1z"/>
<path fill="#ffffff" d="M442 57h5v1h-5z"/>
<path fill="#000080" d="M447 57h1v1h-1z"/>
<path fill="#ffffff" d="M448 57h1v1h-1z"/>
<path fill="#000000" d="M449 57h3v1h-3z"/>
<path fill="#ffffff" d="M452 57h3v1h-3z"/>
<path fill="#000080" d="M455 57h1v1h-1z"/>
<path fill="#000000" d="M441 58h1v1h-1z"/>
<path fill="#ffffff" d="M442 58h1v1h-1z"/>
<path fill="#000000" d="M443 58h4v1h-4z"/>
<path fill="#000080" d="M447 58h1v1h-1z"/>
<path fill="#ffffff" d="M448 58h7v1h-7z"/>
<path fill="#000080" d="M455 58h1v1h-1z"/>
<path fill="#000000" d="M441 59h1v1h-1z"/>
<path fill="#ffffff" d="M442 59h5v1h-5z"/>
<path fill="#000080" d="M447 59h1v1h-1z"/>
<path fill="#ffffff" d="M448 59h1v1h-1z"/>
<path fill="#000000" d="M449 59h5v1h-5z"/>
<path fill="#ffffff" d="M454 59h1v1h-1z"/>
<path fill="#000080" d="M455 59h1v1h-1z"/>
<path fill="#000000" d="M441 60h6v1h-6z"/>
<path fill="#000080" d="M447 60h1v1h-1z"/>
<path fill="#ffffff" d="M448 60h7v1h-7z"/>
<path fill="#000080" d="M455 60h1v1h-1z"/>
<path fill="#000080" d="M447 61h1v1h-1z"/>
<path fill="#ffffff" d="M448 61h1v1h-1z"/>
<path fill="#000000" d="M449 61h5v1h-5z"/>
<path fill="#ffffff" d="M454 61h1v1h-1z"/>
<path fill="#000080" d="M455 61h1v1h-1z"/>
<path fill="#000080" d="M447 62h1v1h-1z"/>
<path fill="#ffffff" d="M448 62h7v1h-7z"/>
<path fill="#000080" d="M455 62h1v1h-1z"/>
<path fill="#000080" d="M447 63h9v1h-9z"/>
<path fill="#808080" d="M469 51h4v1h-4z"/>
<path fill="#808080" d="M465 52h13v1h-13z"/>
<path fill="#808080" d="M464 53h15v1h-15z"/>
<path fill="#808080" d="M464 54h4v1h-4z"/>
<path fill="#ffffff" d="M468 54h6v1h-6z"/>
<path fill="#808080" d="M474 54h5v1h-5z"/>
<path fill="#ffffff" d="M479 54h1v1h-1z"/>
<path fill="#808080" d="M464 55h15v1h-15z"/>
<path fill="#ffffff" d="M479 55h1v1h-1z"/>
<path fill="#808080" d="M464 56h15v1h-15z"/>
<path fill="#ffffff" d="M479 56h1v1h-1z"/>
<path fill="#808080" d="M464 57h15v1h-15z"/>
<path fill="#ffffff" d="M479 57h1v1h-1z"/>
<path fill="#808080" d="M464 58h15v1h-15z"/>
<path fill="#ffffff" d="M479 58h1v1h-1z"/>
<path fill="#808080" d="M464 59h15v1h-15z"/>
<path fill="#ffffff" d="M479 59h1v1h-1z"/>
<path fill="#808080" d="M464 60h15v1h-15z"/>
<path fill="#ffffff" d="M479 60h1v1h-1z"/>
<path fill="#808080" d="M464 61h15v1h-15z"/>
<path fill="#ffffff" d="M479 61h1v1h-1z"/>
<path fill="#808080" d="M464 62h15v1h-15z"/>
<path fill="#ffffff" d="M479 62h1v1h-1z"/>
<path fill="#808080" d="M465 63h14v1h-14z"/>
<path fill="#ffffff" d="M479 63h1v1h-1z"/>
<path fill="#ffffff" d="M466 64h4v1h-4z"/>
<path fill="#808080" d="M470 64h9v1h-9z"/>
<path fill="#ffffff" d="M479 64h1v1h-1z"/>
<path fill="#ffffff" d="M470 65h9v1h-9z"/>
<path fill="#000000" d="M490 52h3v1h-3z"/>
<path fill="#000000" d="M496 52h3v1h-3z"/>
<path fill="#000000" d="M490 53h1v1h-1z"/>
<path fill="#ffffff" d="M491 53h1v1h-1z"/>
<path fill="#000000" d="M492 53h1v1h-1z"/>
<path fill="#000000" d="M496 53h1v1h-1z"/>
<path fill="#ffffff" d="M497 53h1v1h-1z"/>
<path fill="#000000" d="M498 53h1v1h-1z"/>
<path fill="#000000" d="M490 54h3v1h-3z"/>
<path fill="#000000" d="M496 54h3v1h-3z"/>
<path fill="#000000" d="M489 55h5v1h-5z"/>
<path fill="#000000" d="M495 55h5v1h-5z"/>
<path fill="#000000" d="M489 56h1v1h-1z"/>
<path fill="#ffffff" d="M490 56h1v1h-1z"/>
<path fill="#000000" d="M491 56h3v1h-3z"/>
<path fill="#000000" d="M495 56h1v1h-1z"/>
<path fill="#ffffff" d="M496 56h1v1h-1z"/>
<path fill="#000000" d="M497 56h3v1h-3z"/>
<path fill="#000000" d="M488 57h14v1h-14z"/>
<path fill="#000000" d="M487 58h2v1h-2z"/>
<path fill="#ffffff" d="M489 58h1v1h-1z"/>
<path fill="#000000" d="M490 58h2v1h-2z"/>
<path fill="#ffffff" d="M492 58h1v1h-1z"/>
<path fill="#000000" d="M493 58h2v1h-2z"/>
<path fill="#ffffff" d="M495 58h1v1h-1z"/>
<path fill="#000000" d="M496 58h6v1h-6z"/>
<path fill="#000000" d="M487 59h2v1h-2z"/>
<path fill="#ffffff" d="M489 59h1v1h-1z"/>
<path fill="#000000" d="M490 59h2v1h-2z"/>
<path fill="#ffffff" d="M492 59h1v1h-1z"/>
<path fill="#000000" d="M493 59h2v1h-2z"/>
<path fill="#ffffff" d="M495 59h1v1h-1z"/>
<path fill="#000000" d="M496 59h6v1h-6z"/>
<path fill="#000000" d="M487 60h2v1h-2z"/>
<path fill="#ffffff" d="M489 60h1v1h-1z"/>
<path fill="#000000" d="M490 60h5v1h-5z"/>
<path fill="#ffffff" d="M495 60h1v1h-1z"/>
<path fill="#000000" d="M496 60h6v1h-6z"/>
<path fill="#000000" d="M487 61h15v1h-15z"/>
<path fill="#000000" d="M487 62h1v1h-1z"/>
<path fill="#ffffff" d="M488 62h1v1h-1z"/>
<path fill="#000000" d="M489 62h5v1h-5z"/>
<path fill="#000000" d="M495 62h2v1h-2z"/>
<path fill="#ffffff" d="M497 62h1v1h-1z"/>
<path fill="#000000" d="M498 62h4v1h-4z"/>
<path fill="#000000" d="M487 63h1v1h-1z"/>
<path fill="#ffffff" d="M488 63h1v1h-1z"/>
<path fill="#000000" d="M489 63h2v1h-2z"/>
<path fill="#000000" d="M497 63h1v1h-1z"/>
<path fill="#ffffff" d="M498 63h1v1h-1z"/>
<path fill="#000000" d="M499 63h3v1h-3z"/>
<path fill="#000000" d="M487 64h4v1h-4z"/>
<path fill="#000000" d="M497 64h5v1h-5z"/>
<path fill="#000000" d="M487 65h4v1h-4z"/>
<path fill="#000000" d="M497 65h5v1h-5z"/>
<path fill="#000000" d="M522 52h8v1h-8z"/>
<path fill="#000000" d="M522 53h1v1h-1z"/>
<path fill="#ffffff" d="M523 53h2v1h-2z"/>
<path fill="#000000" d="M525 53h1v1h-1z"/>
<path fill="#ffffff" d="M526 53h1v1h-1z"/>
<path fill="#000000" d="M527 53h1v1h-1z"/>
<path fill="#ffffff" d="M528 53h2v1h-2z"/>
<path fill="#000000" d="M530 53h1v1h-1z"/>
<path fill="#000000" d="M522 54h1v1h-1z"/>
<path fill="#ffffff" d="M523 54h3v1h-3z"/>
<path fill="#000000" d="M526 54h1v1h-1z"/>
<path fill="#ffffff" d="M527 54h4v1h-4z"/>
<path fill="#000000" d="M531 54h1v1h-1z"/>
<path fill="#000000" d="M522 55h1v1h-1z"/>
<path fill="#ffffff" d="M523 55h8v1h-8z"/>
<path fill="#000000" d="M531 55h1v1h-1z"/>
<path fill="#000000" d="M520 56h13v1h-13z"/>
<path fill="#000000" d="M519 57h1v1h-1z"/>
<path fill="#ffffff" d="M520 57h1v1h-1z"/>
<path fill="#000000" d="M521 57h1v1h-1z"/>
<path fill="#ffffff" d="M522 57h10v1h-10z"/>
<path fill="#000000" d="M532 57h1v1h-1z"/>
<path fill="#000000" d="M518 58h2v1h-2z"/>
<path fill="#ffffff" d="M520 58h2v1h-2z"/>
<path fill="#c0c0c0" d="M522 58h1v1h-1z"/>
<path fill="#ffffff" d="M523 58h1v1h-1z"/>
<path fill="#c0c0c0" d="M524 58h1v1h-1z"/>
<path fill="#ffffff" d="M525 58h1v1h-1z"/>
<path fill="#c0c0c0" d="M526 58h1v1h-1z"/>
<path fill="#ffffff" d="M527 58h1v1h-1z"/>
<path fill="#c0c0c0" d="M528 58h1v1h-1z"/>
<path fill="#ffffff" d="M529 58h1v1h-1z"/>
<path fill="#c0c0c0" d="M530 58h1v1h-1z"/>
<path fill="#ffffff" d="M531 58h1v1h-1z"/>
<path fill="#000000" d="M532 58h1v1h-1z"/>
<path fill="#000000" d="M518 59h1v1h-1z"/>
<path fill="#ffffff" d="M519 59h2v1h-2z"/>
<path fill="#c0c0c0" d="M521 59h1v1h-1z"/>
<path fill="#ffffff" d="M522 59h1v1h-1z"/>
<path fill="#c0c0c0" d="M523 59h1v1h-1z"/>
<path fill="#ffffff" d="M524 59h1v1h-1z"/>
<path fill="#c0c0c0" d="M525 59h1v1h-1z"/>
<path fill="#ffffff" d="M526 59h1v1h-1z"/>
<path fill="#c0c0c0" d="M527 59h1v1h-1z"/>
<path fill="#ffffff" d="M528 59h1v1h-1z"/>
<path fill="#c0c0c0" d="M529 59h1v1h-1z"/>
<path fill="#ffffff" d="M530 59h1v1h-1z"/>
<path fill="#c0c0c0" d="M531 59h1v1h-1z"/>
<path fill="#000000" d="M532 59h1v1h-1z"/>
<path fill="#000000" d="M518 60h1v1h-1z"/>
<path fill="#ffffff" d="M519 60h1v1h-1z"/>
<path fill="#c0c0c0" d="M520 60h1v1h-1z"/>
<path fill="#ffffff" d="M521 60h1v1h-1z"/>
<path fill="#c0c0c0" d="M522 60h1v1h-1z"/>
<path fill="#ffffff" d="M523 60h1v1h-1z"/>
<path fill="#c0c0c0" d="M524 60h1v1h-1z"/>
<path fill="#ffffff" d="M525 60h1v1h-1z"/>
<path fill="#c0c0c0" d="M526 60h1v1h-1z"/>
<path fill="#ffffff" d="M527 60h1v1h-1z"/>
<path fill="#c0c0c0" d="M528 60h1v1h-1z"/>
<path fill="#ffffff" d="M529 60h1v1h-1z"/>
<path fill="#c0c0c0" d="M530 60h1v1h-1z"/>
<path fill="#ffffff" d="M531 60h1v1h-1z"/>
<path fill="#000000" d="M532 60h1v1h-1z"/>
<path fill="#000000" d="M518 61h1v1h-1z"/>
<path fill="#ffffff" d="M519 61h2v1h-2z"/>
<path fill="#c0c0c0" d="M521 61h1v1h-1z"/>
<path fill="#ffffff" d="M522 61h1v1h-1z"/>
<path fill="#c0c0c0" d="M523 61h1v1h-1z"/>
<path fill="#ffffff" d="M524 61h1v1h-1z"/>
<path fill="#c0c0c0" d="M525 61h1v1h-1z"/>
<path fill="#ffffff" d="M526 61h1v1h-1z"/>
<path fill="#c0c0c0" d="M527 61h1v1h-1z"/>
<path fill="#ffffff" d="M528 61h1v1h-1z"/>
<path fill="#c0c0c0" d="M529 61h1v1h-1z"/>
<path fill="#ffffff" d="M530 61h1v1h-1z"/>
<path fill="#c0c0c0" d="M531 61h1v1h-1z"/>
<path fill="#000000" d="M532 61h1v1h-1z"/>
<path fill="#000000" d="M518 62h1v1h-1z"/>
<path fill="#ffffff" d="M519 62h1v1h-1z"/>
<path fill="#c0c0c0" d="M520 62h1v1h-1z"/>
<path fill="#ffffff" d="M521 62h1v1h-1z"/>
<path fill="#c0c0c0" d="M522 62h1v1h-1z"/>
<path fill="#ffffff" d="M523 62h1v1h-1z"/>
<path fill="#c0c0c0" d="M524 62h1v1h-1z"/>
<path fill="#ffffff" d="M525 62h1v1h-1z"/>
<path fill="#c0c0c0" d="M526 62h1v1h-1z"/>
<path fill="#ffffff" d="M527 62h1v1h-1z"/>
<path fill="#c0c0c0" d="M528 62h1v1h-1z"/>
<path fill="#ffffff" d="M529 62h1v1h-1z"/>
<path fill="#c0c0c0" d="M530 62h1v1h-1z"/>
<path fill="#ffffff" d="M531 62h1v1h-1z"/>
<path fill="#000000" d="M532 62h1v1h-1z"/>
<path fill="#000000" d="M518 63h1v1h-1z"/>
<path fill="#ffffff" d="M519 63h13v1h-13z"/>
<path fill="#000000" d="M532 63h1v1h-1z"/>
<path fill="#000000" d="M518 64h15v1h-15z"/>
<path fill="#000000" d="M522 65h10v1h-10z"/>
<path fill="#000000" d="M545 51h9v1h-9z"/>
<path fill="#000000" d="M544 52h1v1h-1z"/>
<path fill="#ffffff" d="M545 52h8v1h-8z"/>
<path fill="#000000" d="M553 52h1v1h-1z"/>
<path fill="#000000" d="M544 53h1v1h-1z"/>
<path fill="#ffffff" d="M545 53h1v1h-1z"/>
<path fill="#000000" d="M546 53h6v1h-6z"/>
<path fill="#ffffff" d="M552 53h1v1h-1z"/>
<path fill="#000000" d="M553 53h1v1h-1z"/>
<path fill="#000000" d="M543 54h1v1h-1z"/>
<path fill="#ffffff" d="M544 54h8v1h-8z"/>
<path fill="#000000" d="M552 54h1v1h-1z"/>
<path fill="#000000" d="M543 55h1v1h-1z"/>
<path fill="#ffffff" d="M544 55h1v1h-1z"/>
<path fill="#000000" d="M545 55h6v1h-6z"/>
<path fill="#ffffff" d="M551 55h1v1h-1z"/>
<path fill="#000000" d="M552 55h1v1h-1z"/>
<path fill="#000000" d="M542 56h1v1h-1z"/>
<path fill="#ffffff" d="M543 56h9v1h-9z"/>
<path fill="#000000" d="M552 56h2v1h-2z"/>
<path fill="#000000" d="M541 57h12v1h-12z"/>
<path fill="#ffffff" d="M553 57h1v1h-1z"/>
<path fill="#000000" d="M554 57h2v1h-2z"/>
<path fill="#000000" d="M540 58h1v1h-1z"/>
<path fill="#ffffff" d="M541 58h11v1h-11z"/>
<path fill="#000000" d="M552 58h1v1h-1z"/>
<path fill="#ffffff" d="M553 58h1v1h-1z"/>
<path fill="#000000" d="M554 58h1v1h-1z"/>
<path fill="#ffffff" d="M555 58h1v1h-1z"/>
<path fill="#000000" d="M556 58h1v1h-1z"/>
<path fill="#000000" d="M540 59h14v1h-14z"/>
<path fill="#ffffff" d="M554 59h1v1h-1z"/>
<path fill="#000000" d="M555 59h1v1h-1z"/>
<path fill="#000000" d="M540 60h1v1h-1z"/>
<path fill="#ffffff" d="M541 60h12v1h-12z"/>
<path fill="#000000" d="M553 60h1v1h-1z"/>
<path fill="#ffffff" d="M554 60h1v1h-1z"/>
<path fill="#000000" d="M555 60h1v1h-1z"/>
<path fill="#000000" d="M540 61h1v1h-1z"/>
<path fill="#ffffff" d="M541 61h6v1h-6z"/>
<path fill="#ffff00" d="M547 61h4v1h-4z"/>
<path fill="#ffffff" d="M551 61h2v1h-2z"/>
<path fill="#000000" d="M553 61h3v1h-3z"/>
<path fill="#000000" d="M540 62h14v1h-14z"/>
<path fill="#ffffff" d="M554 62h1v1h-1z"/>
<path fill="#000000" d="M555 62h1v1h-1z"/>
<path fill="#000000" d="M541 63h1v1h-1z"/>
<path fill="#ffffff" d="M542 63h11v1h-11z"/>
<path fill="#000000" d="M553 63h2v1h-2z"/>
<path fill="#000000" d="M542 64h12v1h-12z"/>
<path fill="#000000" d="M577 51h3v1h-3z"/>
<path fill="#000000" d="M577 52h3v1h-3z"/>
<path fill="#ff0000" d="M580 52h1v1h-1z"/>
<path fill="#000000" d="M576 53h1v1h-1z"/>
<path fill="#ffff00" d="M577 53h1v1h-1z"/>
<path fill="#000000" d="M578 53h2v1h-2z"/>
<path fill="#ff0000" d="M580 53h1v1h-1z"/>
<path fill="#000000" d="M575 54h1v1h-1z"/>
<path fill="#ffff00" d="M576 54h3v1h-3z"/>
<path fill="#000000" d="M579 54h1v1h-1z"/>
<path fill="#000000" d="M575 55h1v1h-1z"/>
<path fill="#ffff00" d="M576 55h2v1h-2z"/>
<path fill="#ff0000" d="M578 55h1v1h-1z"/>
<path fill="#000000" d="M579 55h1v1h-1z"/>
<path fill="#000000" d="M574 56h1v1h-1z"/>
<path fill="#ffff00" d="M575 56h2v1h-2z"/>
<path fill="#ff0000" d="M577 56h1v1h-1z"/>
<path fill="#000000" d="M578 56h1v1h-1z"/>
<path fill="#000000" d="M574 57h1v1h-1z"/>
<path fill="#ffff00" d="M575 57h2v1h-2z"/>
<path fill="#000000" d="M577 57h2v1h-2z"/>
<path fill="#000000" d="M573 58h1v1h-1z"/>
<path fill="#ffff00" d="M574 58h2v1h-2z"/>
<path fill="#ff0000" d="M576 58h1v1h-1z"/>
<path fill="#000000" d="M577 58h1v1h-1z"/>
<path fill="#000000" d="M573 59h1v1h-1z"/>
<path fill="#ffff00" d="M574 59h1v1h-1z"/>
<path fill="#ff0000" d="M575 59h1v1h-1z"/>
<path fill="#000000" d="M576 59h1v1h-1z"/>
<path fill="#000000" d="M573 60h2v1h-2z"/>
<path fill="#ff0000" d="M575 60h1v1h-1z"/>
<path fill="#000000" d="M576 60h1v1h-1z"/>
<path fill="#000000" d="M573 61h3v1h-3z"/>
<path fill="#000000" d="M573 62h2v1h-2z"/>
<path fill="#000000" d="M573 63h1v1h-1z"/>
<path fill="#0000ff" d="M573 64h14v1h-14z"/>
<rect x="601" y="51" width="1" height="7" fill="#000"/>
<path d="M594.5,58.5 L608.5,58.5 L601.5,65.5 Z" fill="#d4d0c8" stroke="#000" stroke-width="1.1" shape-rendering="geometricPrecision"/>
<path d="M596,59.5 L607,59.5 L601.5,64.5" fill="none" stroke="#808000" stroke-width="1" shape-rendering="geometricPrecision"/>
<path fill="#000000" d="M618 52h13v1h-13z"/>
<path fill="#000000" d="M617 53h1v1h-1z"/>
<path fill="#808000" d="M618 53h1v1h-1z"/>
<path fill="#d4d0c8" d="M619 53h11v1h-11z"/>
<path fill="#808000" d="M630 53h1v1h-1z"/>
<path fill="#000000" d="M631 53h1v1h-1z"/>
<path fill="#000000" d="M617 54h1v1h-1z"/>
<path fill="#808000" d="M618 54h1v1h-1z"/>
<path fill="#d4d0c8" d="M619 54h3v1h-3z"/>
<path fill="#000000" d="M622 54h4v1h-4z"/>
<path fill="#d4d0c8" d="M626 54h4v1h-4z"/>
<path fill="#808000" d="M630 54h1v1h-1z"/>
<path fill="#000000" d="M631 54h1v1h-1z"/>
<path fill="#000000" d="M617 55h1v1h-1z"/>
<path fill="#808000" d="M618 55h1v1h-1z"/>
<path fill="#d4d0c8" d="M619 55h2v1h-2z"/>
<path fill="#000000" d="M621 55h2v1h-2z"/>
<path fill="#d4d0c8" d="M623 55h2v1h-2z"/>
<path fill="#000000" d="M625 55h2v1h-2z"/>
<path fill="#d4d0c8" d="M627 55h3v1h-3z"/>
<path fill="#808000" d="M630 55h1v1h-1z"/>
<path fill="#000000" d="M631 55h1v1h-1z"/>
<path fill="#000000" d="M617 56h1v1h-1z"/>
<path fill="#808000" d="M618 56h1v1h-1z"/>
<path fill="#d4d0c8" d="M619 56h2v1h-2z"/>
<path fill="#000000" d="M621 56h2v1h-2z"/>
<path fill="#d4d0c8" d="M623 56h2v1h-2z"/>
<path fill="#000000" d="M625 56h2v1h-2z"/>
<path fill="#d4d0c8" d="M627 56h3v1h-3z"/>
<path fill="#808000" d="M630 56h1v1h-1z"/>
<path fill="#000000" d="M631 56h1v1h-1z"/>
<path fill="#000000" d="M617 57h1v1h-1z"/>
<path fill="#808000" d="M618 57h1v1h-1z"/>
<path fill="#d4d0c8" d="M619 57h2v1h-2z"/>
<path fill="#000000" d="M621 57h6v1h-6z"/>
<path fill="#d4d0c8" d="M627 57h3v1h-3z"/>
<path fill="#808000" d="M630 57h1v1h-1z"/>
<path fill="#000000" d="M631 57h1v1h-1z"/>
<path fill="#000000" d="M617 58h1v1h-1z"/>
<path fill="#808000" d="M618 58h1v1h-1z"/>
<path fill="#d4d0c8" d="M619 58h2v1h-2z"/>
<path fill="#000000" d="M621 58h2v1h-2z"/>
<path fill="#d4d0c8" d="M623 58h2v1h-2z"/>
<path fill="#000000" d="M625 58h2v1h-2z"/>
<path fill="#d4d0c8" d="M627 58h3v1h-3z"/>
<path fill="#808000" d="M630 58h1v1h-1z"/>
<path fill="#000000" d="M631 58h1v1h-1z"/>
<path fill="#000000" d="M617 59h1v1h-1z"/>
<path fill="#808000" d="M618 59h1v1h-1z"/>
<path fill="#d4d0c8" d="M619 59h2v1h-2z"/>
<path fill="#000000" d="M621 59h2v1h-2z"/>
<path fill="#d4d0c8" d="M623 59h2v1h-2z"/>
<path fill="#000000" d="M625 59h2v1h-2z"/>
<path fill="#d4d0c8" d="M627 59h3v1h-3z"/>
<path fill="#808000" d="M630 59h1v1h-1z"/>
<path fill="#000000" d="M631 59h1v1h-1z"/>
<path fill="#000000" d="M617 60h1v1h-1z"/>
<path fill="#808000" d="M618 60h1v1h-1z"/>
<path fill="#d4d0c8" d="M619 60h11v1h-11z"/>
<path fill="#808000" d="M630 60h1v1h-1z"/>
<path fill="#000000" d="M631 60h1v1h-1z"/>
<path fill="#000000" d="M618 61h13v1h-13z"/>
<path fill="#000000" d="M624 62h1v1h-1z"/>
<path fill="#000000" d="M624 63h1v1h-1z"/>
<path fill="#000000" d="M624 64h1v1h-1z"/>
<path fill="#000000" d="M624 65h1v1h-1z"/>
<path d="M647,51 L648,52 L653.5,55 L643.5,60.5 L648,64 L648,66" fill="none" stroke="#000" stroke-width="1.1" shape-rendering="geometricPrecision"/>
<rect x="670" y="51" width="1" height="6" fill="#000"/><rect x="665" y="57" width="11" height="1" fill="#000"/><rect x="665" y="60" width="11" height="1" fill="#000"/><rect x="670" y="61" width="1" height="5" fill="#000"/>
<rect x="665" y="56" width="11" height="1" fill="#404040" opacity="0.5"/><rect x="665" y="61" width="11" height="1" fill="#404040" opacity="0.5"/>
<path d="M690.5,51.5 L693,52 Q696.5,54 695.5,57 Q695,58.5 692,58.5 Q696,59 696,62 Q695.5,65 691,65.5" fill="none" stroke="#000" stroke-width="1.1" shape-rendering="geometricPrecision"/>
<path d="M710.5,54.5 L724.5,54.5 L717.5,61.5 Z" fill="#c0c0c0" stroke="#000" stroke-width="1"/>
<rect x="717" y="51" width="1" height="15" fill="#000"/><rect x="710" y="62" width="15" height="1" fill="#000"/>
<path d="M735.5,53.5 L740.5,53.5 Q744.5,53.5 744.5,58.5 Q744.5,63.5 740.5,63.5 L735.5,63.5 Z" fill="#c0c0c0" stroke="#000" stroke-width="1.1" shape-rendering="geometricPrecision"/>
<rect x="732" y="55" width="3" height="1" fill="#000"/><rect x="732" y="61" width="3" height="1" fill="#000"/><rect x="745" y="58" width="3" height="1" fill="#000"/>
<path fill="#000000" d="M758 51h2v1h-2z"/>
<path fill="#000000" d="M765 51h2v1h-2z"/>
<path fill="#000000" d="M757 52h1v1h-1z"/>
<path fill="#ffffff" d="M758 52h2v1h-2z"/>
<path fill="#000000" d="M760 52h1v1h-1z"/>
<path fill="#000000" d="M764 52h1v1h-1z"/>
<path fill="#ffffff" d="M765 52h2v1h-2z"/>
<path fill="#000000" d="M767 52h1v1h-1z"/>
<path fill="#000000" d="M757 53h1v1h-1z"/>
<path fill="#ffffff" d="M758 53h2v1h-2z"/>
<path fill="#000000" d="M760 53h1v1h-1z"/>
<path fill="#000000" d="M763 53h1v1h-1z"/>
<path fill="#ffffff" d="M764 53h3v1h-3z"/>
<path fill="#000000" d="M767 53h2v1h-2z"/>
<path fill="#000000" d="M757 54h1v1h-1z"/>
<path fill="#ffffff" d="M758 54h3v1h-3z"/>
<path fill="#000000" d="M761 54h1v1h-1z"/>
<path fill="#000000" d="M763 54h1v1h-1z"/>
<path fill="#ffffff" d="M764 54h1v1h-1z"/>
<path fill="#000000" d="M765 54h1v1h-1z"/>
<path fill="#ffffff" d="M766 54h2v1h-2z"/>
<path fill="#000000" d="M768 54h1v1h-1z"/>
<path fill="#000000" d="M758 55h1v1h-1z"/>
<path fill="#ffffff" d="M759 55h2v1h-2z"/>
<path fill="#000000" d="M761 55h1v1h-1z"/>
<path fill="#000000" d="M763 55h1v1h-1z"/>
<path fill="#ffffff" d="M764 55h1v1h-1z"/>
<path fill="#000000" d="M765 55h1v1h-1z"/>
<path fill="#ffffff" d="M766 55h3v1h-3z"/>
<path fill="#000000" d="M769 55h1v1h-1z"/>
<path fill="#000000" d="M756 56h2v1h-2z"/>
<path fill="#000000" d="M759 56h1v1h-1z"/>
<path fill="#ffffff" d="M760 56h2v1h-2z"/>
<path fill="#000000" d="M762 56h1v1h-1z"/>
<path fill="#ffffff" d="M763 56h1v1h-1z"/>
<path fill="#000000" d="M764 56h1v1h-1z"/>
<path fill="#ffffff" d="M765 56h2v1h-2z"/>
<path fill="#000000" d="M767 56h1v1h-1z"/>
<path fill="#ffffff" d="M768 56h1v1h-1z"/>
<path fill="#000000" d="M769 56h1v1h-1z"/>
<path fill="#000000" d="M755 57h1v1h-1z"/>
<path fill="#ffffff" d="M756 57h2v1h-2z"/>
<path fill="#000000" d="M758 57h2v1h-2z"/>
<path fill="#ffffff" d="M760 57h6v1h-6z"/>
<path fill="#000000" d="M766 57h1v1h-1z"/>
<path fill="#ffffff" d="M767 57h2v1h-2z"/>
<path fill="#000000" d="M769 57h1v1h-1z"/>
<path fill="#000000" d="M755 58h1v1h-1z"/>
<path fill="#ffffff" d="M756 58h3v1h-3z"/>
<path fill="#000000" d="M759 58h1v1h-1z"/>
<path fill="#ffffff" d="M760 58h10v1h-10z"/>
<path fill="#000000" d="M770 58h1v1h-1z"/>
<path fill="#000000" d="M756 59h1v1h-1z"/>
<path fill="#ffffff" d="M757 59h13v1h-13z"/>
<path fill="#000000" d="M770 59h1v1h-1z"/>
<path fill="#000000" d="M757 60h1v1h-1z"/>
<path fill="#ffffff" d="M758 60h11v1h-11z"/>
<path fill="#000000" d="M769 60h1v1h-1z"/>
<path fill="#000000" d="M758 61h1v1h-1z"/>
<path fill="#ffffff" d="M759 61h9v1h-9z"/>
<path fill="#000000" d="M768 61h1v1h-1z"/>
<path fill="#000000" d="M759 62h1v1h-1z"/>
<path fill="#ffffff" d="M760 62h7v1h-7z"/>
<path fill="#000000" d="M767 62h1v1h-1z"/>
<path fill="#000000" d="M760 63h1v1h-1z"/>
<path fill="#ffffff" d="M761 63h5v1h-5z"/>
<path fill="#000000" d="M766 63h1v1h-1z"/>
<path fill="#000000" d="M760 64h1v1h-1z"/>
<path fill="#ffffff" d="M761 64h5v1h-5z"/>
<path fill="#000000" d="M766 64h1v1h-1z"/>
<path fill="#000000" d="M760 65h7v1h-7z"/>
<path fill="#000000" d="M783 53h2v1h-2z"/>
<path fill="#000000" d="M786 53h2v1h-2z"/>
<path fill="#000000" d="M782 54h1v1h-1z"/>
<path fill="#ffffff" d="M783 54h2v1h-2z"/>
<path fill="#000000" d="M785 54h1v1h-1z"/>
<path fill="#ffffff" d="M786 54h2v1h-2z"/>
<path fill="#000000" d="M788 54h2v1h-2z"/>
<path fill="#000000" d="M782 55h1v1h-1z"/>
<path fill="#ffffff" d="M783 55h2v1h-2z"/>
<path fill="#000000" d="M785 55h1v1h-1z"/>
<path fill="#ffffff" d="M786 55h2v1h-2z"/>
<path fill="#000000" d="M788 55h1v1h-1z"/>
<path fill="#ffffff" d="M789 55h1v1h-1z"/>
<path fill="#000000" d="M790 55h1v1h-1z"/>
<path fill="#000000" d="M780 56h3v1h-3z"/>
<path fill="#ffffff" d="M783 56h2v1h-2z"/>
<path fill="#000000" d="M785 56h1v1h-1z"/>
<path fill="#ffffff" d="M786 56h2v1h-2z"/>
<path fill="#000000" d="M788 56h1v1h-1z"/>
<path fill="#ffffff" d="M789 56h2v1h-2z"/>
<path fill="#000000" d="M791 56h1v1h-1z"/>
<path fill="#000000" d="M779 57h1v1h-1z"/>
<path fill="#ffffff" d="M780 57h2v1h-2z"/>
<path fill="#000000" d="M782 57h1v1h-1z"/>
<path fill="#ffffff" d="M783 57h2v1h-2z"/>
<path fill="#000000" d="M785 57h1v1h-1z"/>
<path fill="#ffffff" d="M786 57h2v1h-2z"/>
<path fill="#000000" d="M788 57h1v1h-1z"/>
<path fill="#ffffff" d="M789 57h2v1h-2z"/>
<path fill="#000000" d="M791 57h1v1h-1z"/>
<path fill="#000000" d="M779 58h1v1h-1z"/>
<path fill="#ffffff" d="M780 58h11v1h-11z"/>
<path fill="#000000" d="M791 58h1v1h-1z"/>
<path fill="#000000" d="M780 59h1v1h-1z"/>
<path fill="#ffffff" d="M781 59h10v1h-10z"/>
<path fill="#000000" d="M791 59h1v1h-1z"/>
<path fill="#000000" d="M781 60h1v1h-1z"/>
<path fill="#ffffff" d="M782 60h8v1h-8z"/>
<path fill="#000000" d="M790 60h1v1h-1z"/>
<path fill="#000000" d="M781 61h1v1h-1z"/>
<path fill="#ffffff" d="M782 61h8v1h-8z"/>
<path fill="#000000" d="M790 61h1v1h-1z"/>
<path fill="#000000" d="M782 62h1v1h-1z"/>
<path fill="#ffffff" d="M783 62h6v1h-6z"/>
<path fill="#000000" d="M789 62h1v1h-1z"/>
<path fill="#000000" d="M782 63h1v1h-1z"/>
<path fill="#ffffff" d="M783 63h6v1h-6z"/>
<path fill="#000000" d="M789 63h1v1h-1z"/>
<path fill="#000000" d="M782 64h1v1h-1z"/>
<path fill="#ffffff" d="M783 64h6v1h-6z"/>
<path fill="#000000" d="M789 64h1v1h-1z"/>
<path fill="#000000" d="M782 65h8v1h-8z"/>
<path d="M804,58 A5.5,5.5 0 1 1 808,64.5" fill="none" stroke="#000" stroke-width="1.2" stroke-dasharray="2.2 0.8" shape-rendering="geometricPrecision"/>
<path d="M806,55 A5.5,5.5 0 0 1 814,57" fill="none" stroke="#808000" stroke-width="1.2" shape-rendering="geometricPrecision"/>
<path d="M802,55 L802,59.5 L806,59.5 Z" fill="#000"/>
<path d="M838,59 A5.5,5.5 0 1 0 833,64.5" fill="none" stroke="#808080" stroke-width="1.2" shape-rendering="geometricPrecision"/>
<path d="M839.5,55 L839.5,60 L835,59.5 Z" fill="#808080"/>
<path fill="#808080" d="M852 51h6v1h-6z"/>
<path fill="#808080" d="M851 52h1v1h-1z"/>
<path fill="#808080" d="M858 52h1v1h-1z"/>
<path fill="#808080" d="M860 52h1v1h-1z"/>
<path fill="#808080" d="M850 53h1v1h-1z"/>
<path fill="#808080" d="M859 53h2v1h-2z"/>
<path fill="#808080" d="M849 54h1v1h-1z"/>
<path fill="#808080" d="M857 54h4v1h-4z"/>
<path fill="#808080" d="M847 57h5v1h-5z"/>
<path fill="#808080" d="M847 58h2v1h-2z"/>
<path fill="#ffffff" d="M849 58h3v1h-3z"/>
<path fill="#808080" d="M847 59h2v1h-2z"/>
<path fill="#ffffff" d="M849 59h1v1h-1z"/>
<path fill="#808080" d="M854 59h9v1h-9z"/>
<path fill="#808080" d="M847 60h2v1h-2z"/>
<path fill="#ffffff" d="M849 60h1v1h-1z"/>
<path fill="#808080" d="M854 60h9v1h-9z"/>
<path fill="#ffffff" d="M863 60h1v1h-1z"/>
<path fill="#808080" d="M847 61h4v1h-4z"/>
<path fill="#808080" d="M854 61h1v1h-1z"/>
<path fill="#ffffff" d="M855 61h2v1h-2z"/>
<path fill="#808080" d="M858 61h1v1h-1z"/>
<path fill="#ffffff" d="M859 61h2v1h-2z"/>
<path fill="#808080" d="M862 61h1v1h-1z"/>
<path fill="#ffffff" d="M863 61h1v1h-1z"/>
<path fill="#808080" d="M847 62h2v1h-2z"/>
<path fill="#ffffff" d="M849 62h3v1h-3z"/>
<path fill="#808080" d="M854 62h1v1h-1z"/>
<path fill="#ffffff" d="M855 62h1v1h-1z"/>
<path fill="#808080" d="M858 62h1v1h-1z"/>
<path fill="#ffffff" d="M859 62h1v1h-1z"/>
<path fill="#808080" d="M862 62h1v1h-1z"/>
<path fill="#ffffff" d="M863 62h1v1h-1z"/>
<path fill="#808080" d="M847 63h2v1h-2z"/>
<path fill="#ffffff" d="M849 63h1v1h-1z"/>
<path fill="#808080" d="M854 63h1v1h-1z"/>
<path fill="#ffffff" d="M855 63h1v1h-1z"/>
<path fill="#808080" d="M858 63h1v1h-1z"/>
<path fill="#ffffff" d="M859 63h1v1h-1z"/>
<path fill="#808080" d="M862 63h1v1h-1z"/>
<path fill="#ffffff" d="M863 63h1v1h-1z"/>
<path fill="#808080" d="M847 64h2v1h-2z"/>
<path fill="#ffffff" d="M849 64h1v1h-1z"/>
<path fill="#ffffff" d="M855 64h1v1h-1z"/>
<path fill="#ffffff" d="M859 64h1v1h-1z"/>
<path fill="#ffffff" d="M863 64h1v1h-1z"/>
<path fill="#808080" d="M847 65h5v1h-5z"/>
<path fill="#ffffff" d="M848 66h5v1h-5z"/>
<path fill="#808080" d="M875 51h6v1h-6z"/>
<path fill="#808080" d="M874 52h1v1h-1z"/>
<path fill="#808080" d="M881 52h1v1h-1z"/>
<path fill="#808080" d="M883 52h1v1h-1z"/>
<path fill="#808080" d="M873 53h1v1h-1z"/>
<path fill="#808080" d="M882 53h2v1h-2z"/>
<path fill="#808080" d="M872 54h1v1h-1z"/>
<path fill="#808080" d="M880 54h4v1h-4z"/>
<path fill="#808080" d="M870 57h5v1h-5z"/>
<path fill="#808080" d="M881 57h5v1h-5z"/>
<path fill="#808080" d="M870 58h2v1h-2z"/>
<path fill="#ffffff" d="M872 58h3v1h-3z"/>
<path fill="#ffffff" d="M882 58h2v1h-2z"/>
<path fill="#808080" d="M884 58h2v1h-2z"/>
<path fill="#808080" d="M870 59h2v1h-2z"/>
<path fill="#ffffff" d="M872 59h1v1h-1z"/>
<path fill="#808080" d="M884 59h2v1h-2z"/>
<path fill="#808080" d="M870 60h2v1h-2z"/>
<path fill="#ffffff" d="M872 60h1v1h-1z"/>
<path fill="#808080" d="M884 60h2v1h-2z"/>
<path fill="#808080" d="M870 61h4v1h-4z"/>
<path fill="#808080" d="M882 61h4v1h-4z"/>
<path fill="#808080" d="M870 62h2v1h-2z"/>
<path fill="#ffffff" d="M872 62h3v1h-3z"/>
<path fill="#ffffff" d="M883 62h1v1h-1z"/>
<path fill="#808080" d="M884 62h2v1h-2z"/>
<path fill="#808080" d="M870 63h2v1h-2z"/>
<path fill="#ffffff" d="M872 63h1v1h-1z"/>
<path fill="#808080" d="M884 63h2v1h-2z"/>
<path fill="#808080" d="M870 64h2v1h-2z"/>
<path fill="#ffffff" d="M872 64h1v1h-1z"/>
<path fill="#808080" d="M884 64h2v1h-2z"/>
<path fill="#808080" d="M870 65h5v1h-5z"/>
<path fill="#808080" d="M881 65h5v1h-5z"/>
<path fill="#ffffff" d="M871 66h5v1h-5z"/>
<path fill="#ffffff" d="M881 66h5v1h-5z"/>
<text x="893" y="64" style="font-family:Liberation Serif" font-size="14" font-style="italic" font-weight="bold" fill="#000" textLength="16" lengthAdjust="spacingAndGlyphs">Aa</text>
<text x="916" y="61" style="font-family:Liberation Serif" font-size="12" fill="#000" textLength="14.5" lengthAdjust="spacingAndGlyphs">.op</text>
<rect x="99" y="75" width="91" height="1" fill="#ffffff"/>
<rect x="190" y="76" width="1" height="18" fill="#808080"/>
<rect x="191" y="77" width="1" height="17" fill="#404040"/>
<rect x="99" y="94" width="1180" height="1" fill="#ffffff"/>
<rect x="1279" y="94" width="1" height="6" fill="#404040"/>
<path d="M0.5,100 L0.5,75.5 Q0.5,73.5 2.5,73.5 L95.5,73.5" fill="none" stroke="#fff" stroke-width="1"/>
<rect x="97" y="74" width="1" height="21" fill="#404040"/>
<rect x="98" y="75" width="1" height="20" fill="#404040"/>
<rect x="10" y="82" width="3" height="1" fill="#0000ff"/>
<rect x="13" y="78" width="2" height="9" fill="#0000ff"/>
<rect x="15" y="79" width="1" height="1" fill="#0000ff"/>
<rect x="16" y="78" width="1" height="1" fill="#0000ff"/>
<rect x="17" y="77" width="1" height="1" fill="#0000ff"/>
<rect x="18" y="76" width="1" height="1" fill="#0000ff"/>
<rect x="19" y="75" width="1" height="1" fill="#0000ff"/>
<rect x="15" y="85" width="1" height="1" fill="#0000ff"/>
<rect x="16" y="86" width="1" height="1" fill="#0000ff"/>
<rect x="17" y="87" width="1" height="1" fill="#0000ff"/>
<rect x="18" y="88" width="1" height="1" fill="#0000ff"/>
<rect x="19" y="89" width="1" height="1" fill="#0000ff"/>
<rect x="20" y="90" width="1" height="1" fill="#0000ff"/>
<rect x="16" y="88" width="3" height="1" fill="#0000ff"/><rect x="18" y="86" width="1" height="3" fill="#0000ff"/><rect x="17" y="87" width="2" height="2" fill="#0000ff"/>
<rect x="107" y="76" width="12" height="12" fill="#c0c0c0"/>
<rect x="105" y="76" width="1" height="16" fill="#000"/>
<rect x="103" y="89" width="16" height="1" fill="#000"/>
<rect x="103" y="77" width="2" height="1" fill="#000"/>
<rect x="105" y="90" width="1" height="2" fill="#000"/>
<rect x="103" y="80" width="2" height="1" fill="#000"/>
<rect x="108" y="90" width="1" height="2" fill="#000"/>
<rect x="103" y="83" width="2" height="1" fill="#000"/>
<rect x="111" y="90" width="1" height="2" fill="#000"/>
<rect x="103" y="86" width="2" height="1" fill="#000"/>
<rect x="114" y="90" width="1" height="2" fill="#000"/>
<rect x="103" y="89" width="2" height="1" fill="#000"/>
<rect x="117" y="90" width="1" height="2" fill="#000"/>
<path d="M106,84 L109,80.5 L112,80.5 L114,83 L116,83 L118.5,79.5" fill="none" stroke="#ff0000" stroke-width="2" shape-rendering="geometricPrecision"/>
<text x="30" y="88" font-size="11" fill="#000" font-weight="normal" text-anchor="start" textLength="60.5" lengthAdjust="spacingAndGlyphs" shape-rendering="geometricPrecision">swl-mod.asc</text>
<text x="125" y="89" font-size="11" fill="#000" font-weight="normal" text-anchor="start" textLength="60.2" lengthAdjust="spacingAndGlyphs" shape-rendering="geometricPrecision">swl-mod.asc</text>
<rect x="0" y="100" width="1280" height="866" fill="#d4d0c8"/>
<rect x="0" y="100" width="1280" height="1" fill="#808080"/>
<rect x="0" y="100" width="1" height="866" fill="#808080"/>
<rect x="1" y="101" width="1278" height="1" fill="#404040"/>
<rect x="1" y="101" width="1" height="864" fill="#404040"/>
<rect x="0" y="965" width="1280" height="1" fill="#ffffff"/>
<rect x="1279" y="100" width="1" height="866" fill="#ffffff"/>
<rect x="1" y="964" width="1278" height="1" fill="#d4d0c8"/>
<rect x="1278" y="101" width="1" height="864" fill="#d4d0c8"/>
<rect x="2" y="102" width="1276" height="431" fill="#d4d0c8"/>
<rect x="2" y="102" width="1276" height="1" fill="#d4d0c8"/>
<rect x="2" y="102" width="1" height="431" fill="#d4d0c8"/>
<rect x="3" y="103" width="1274" height="1" fill="#ffffff"/>
<rect x="3" y="103" width="1" height="429" fill="#ffffff"/>
<rect x="2" y="532" width="1276" height="1" fill="#404040"/>
<rect x="1277" y="102" width="1" height="431" fill="#404040"/>
<rect x="3" y="531" width="1274" height="1" fill="#808080"/>
<rect x="1276" y="103" width="1" height="429" fill="#808080"/>
<defs><linearGradient id="gInact" x1="0" x2="1" y1="0" y2="0"><stop offset="0" stop-color="#808080"/><stop offset="1" stop-color="#c0c0c0"/></linearGradient><linearGradient id="gAct" x1="0" x2="1" y1="0" y2="0"><stop offset="0" stop-color="#0a246a"/><stop offset="1" stop-color="#a6caf0"/></linearGradient><pattern id="chk" width="2" height="2" patternUnits="userSpaceOnUse"><rect width="2" height="2" fill="#d4d0c8"/><rect width="1" height="1" fill="#fff"/><rect x="1" y="1" width="1" height="1" fill="#fff"/></pattern></defs>
<rect x="6" y="106" width="1268" height="18" fill="url(#gInact)"/>
<rect x="12" y="107" width="12" height="12" fill="#c0c0c0"/>
<rect x="10" y="107" width="1" height="16" fill="#000"/>
<rect x="8" y="120" width="16" height="1" fill="#000"/>
<rect x="8" y="108" width="2" height="1" fill="#000"/>
<rect x="10" y="121" width="1" height="2" fill="#000"/>
<rect x="8" y="111" width="2" height="1" fill="#000"/>
<rect x="13" y="121" width="1" height="2" fill="#000"/>
<rect x="8" y="114" width="2" height="1" fill="#000"/>
<rect x="16" y="121" width="1" height="2" fill="#000"/>
<rect x="8" y="117" width="2" height="1" fill="#000"/>
<rect x="19" y="121" width="1" height="2" fill="#000"/>
<rect x="8" y="120" width="2" height="1" fill="#000"/>
<rect x="22" y="121" width="1" height="2" fill="#000"/>
<path d="M11,115 L14,111.5 L17,111.5 L19,114 L21,114 L23.5,110.5" fill="none" stroke="#ff0000" stroke-width="2" shape-rendering="geometricPrecision"/>
<text x="26" y="119" font-size="11" fill="#d4d0c8" font-weight="normal" text-anchor="start" textLength="69" lengthAdjust="spacingAndGlyphs" shape-rendering="geometricPrecision">swl-mod.asc</text>
<rect x="1222" y="107" width="16" height="14" fill="#d4d0c8"/>
<rect x="1222" y="107" width="16" height="1" fill="#ffffff"/>
<rect x="1222" y="107" width="1" height="14" fill="#ffffff"/>
<rect x="1222" y="120" width="16" height="1" fill="#404040"/>
<rect x="1237" y="107" width="1" height="14" fill="#404040"/>
<rect x="1223" y="119" width="14" height="1" fill="#808080"/>
<rect x="1236" y="108" width="1" height="12" fill="#808080"/>
<rect x="1226" y="117" width="6" height="2" fill="#000"/>
<rect x="1238" y="107" width="16" height="14" fill="#d4d0c8"/>
<rect x="1238" y="107" width="16" height="1" fill="#ffffff"/>
<rect x="1238" y="107" width="1" height="14" fill="#ffffff"/>
<rect x="1238" y="120" width="16" height="1" fill="#404040"/>
<rect x="1253" y="107" width="1" height="14" fill="#404040"/>
<rect x="1239" y="119" width="14" height="1" fill="#808080"/>
<rect x="1252" y="108" width="1" height="12" fill="#808080"/>
<rect x="1241" y="110" width="9" height="9" fill="#000"/>
<rect x="1242" y="112" width="7" height="6" fill="#d4d0c8"/>
<rect x="1256" y="107" width="16" height="14" fill="#d4d0c8"/>
<rect x="1256" y="107" width="16" height="1" fill="#ffffff"/>
<rect x="1256" y="107" width="1" height="14" fill="#ffffff"/>
<rect x="1256" y="120" width="16" height="1" fill="#404040"/>
<rect x="1271" y="107" width="1" height="14" fill="#404040"/>
<rect x="1257" y="119" width="14" height="1" fill="#808080"/>
<rect x="1270" y="108" width="1" height="12" fill="#808080"/>
<path d="M1260,110 L1268,118 M1268,110 L1260,118" stroke="#000" stroke-width="1.5" shape-rendering="geometricPrecision"/>
<rect x="6" y="125" width="1268" height="1" fill="#808080"/>
<rect x="6" y="125" width="1" height="404" fill="#808080"/>
<rect x="7" y="126" width="1266" height="1" fill="#404040"/>
<rect x="7" y="126" width="1" height="402" fill="#404040"/>
<rect x="6" y="528" width="1268" height="1" fill="#ffffff"/>
<rect x="1273" y="125" width="1" height="404" fill="#ffffff"/>
<rect x="7" y="527" width="1266" height="1" fill="#d4d0c8"/>
<rect x="1272" y="126" width="1" height="402" fill="#d4d0c8"/>
<rect x="8" y="127" width="1264" height="400" fill="#000"/>
<line x1="94.5" y1="145" x2="94.5" y2="500" stroke="#808080" stroke-width="1" stroke-dasharray="3 3"/>
<rect x="94" y="502" width="1" height="3" fill="#c0c0c0"/>
<line x1="127.5" y1="145" x2="127.5" y2="500" stroke="#808080" stroke-width="1" stroke-dasharray="3 3"/>
<rect x="127" y="502" width="1" height="3" fill="#c0c0c0"/>
<line x1="156.5" y1="145" x2="156.5" y2="500" stroke="#808080" stroke-width="1" stroke-dasharray="3 3"/>
<rect x="156" y="502" width="1" height="3" fill="#c0c0c0"/>
<line x1="182.5" y1="145" x2="182.5" y2="500" stroke="#808080" stroke-width="1" stroke-dasharray="3 3"/>
<rect x="182" y="502" width="1" height="3" fill="#c0c0c0"/>
<line x1="205.5" y1="145" x2="205.5" y2="500" stroke="#808080" stroke-width="1" stroke-dasharray="3 3"/>
<rect x="205" y="502" width="1" height="7" fill="#c0c0c0"/>
<line x1="355.5" y1="145" x2="355.5" y2="500" stroke="#808080" stroke-width="1" stroke-dasharray="3 3"/>
<rect x="355" y="502" width="1" height="3" fill="#c0c0c0"/>
<line x1="444.5" y1="145" x2="444.5" y2="500" stroke="#808080" stroke-width="1" stroke-dasharray="3 3"/>
<rect x="444" y="502" width="1" height="3" fill="#c0c0c0"/>
<line x1="506.5" y1="145" x2="506.5" y2="500" stroke="#808080" stroke-width="1" stroke-dasharray="3 3"/>
<rect x="506" y="502" width="1" height="3" fill="#c0c0c0"/>
<line x1="555.5" y1="145" x2="555.5" y2="500" stroke="#808080" stroke-width="1" stroke-dasharray="3 3"/>
<rect x="555" y="502" width="1" height="3" fill="#c0c0c0"/>
<line x1="594.5" y1="145" x2="594.5" y2="500" stroke="#808080" stroke-width="1" stroke-dasharray="3 3"/>
<rect x="594" y="502" width="1" height="3" fill="#c0c0c0"/>
<line x1="628.5" y1="145" x2="628.5" y2="500" stroke="#808080" stroke-width="1" stroke-dasharray="3 3"/>
<rect x="628" y="502" width="1" height="3" fill="#c0c0c0"/>
<line x1="657.5" y1="145" x2="657.5" y2="500" stroke="#808080" stroke-width="1" stroke-dasharray="3 3"/>
<rect x="657" y="502" width="1" height="3" fill="#c0c0c0"/>
<line x1="682.5" y1="145" x2="682.5" y2="500" stroke="#808080" stroke-width="1" stroke-dasharray="3 3"/>
<rect x="682" y="502" width="1" height="3" fill="#c0c0c0"/>
<line x1="705.5" y1="145" x2="705.5" y2="500" stroke="#808080" stroke-width="1" stroke-dasharray="3 3"/>
<rect x="705" y="502" width="1" height="7" fill="#c0c0c0"/>
<line x1="856.5" y1="145" x2="856.5" y2="500" stroke="#808080" stroke-width="1" stroke-dasharray="3 3"/>
<rect x="856" y="502" width="1" height="3" fill="#c0c0c0"/>
<line x1="944.5" y1="145" x2="944.5" y2="500" stroke="#808080" stroke-width="1" stroke-dasharray="3 3"/>
<rect x="944" y="502" width="1" height="3" fill="#c0c0c0"/>
<line x1="1007.5" y1="145" x2="1007.5" y2="500" stroke="#808080" stroke-width="1" stroke-dasharray="3 3"/>
<rect x="1007" y="502" width="1" height="3" fill="#c0c0c0"/>
<line x1="1055.5" y1="145" x2="1055.5" y2="500" stroke="#808080" stroke-width="1" stroke-dasharray="3 3"/>
<rect x="1055" y="502" width="1" height="3" fill="#c0c0c0"/>
<line x1="1095.5" y1="145" x2="1095.5" y2="500" stroke="#808080" stroke-width="1" stroke-dasharray="3 3"/>
<rect x="1095" y="502" width="1" height="3" fill="#c0c0c0"/>
<line x1="1128.5" y1="145" x2="1128.5" y2="500" stroke="#808080" stroke-width="1" stroke-dasharray="3 3"/>
<rect x="1128" y="502" width="1" height="3" fill="#c0c0c0"/>
<line x1="1157.5" y1="145" x2="1157.5" y2="500" stroke="#808080" stroke-width="1" stroke-dasharray="3 3"/>
<rect x="1157" y="502" width="1" height="3" fill="#c0c0c0"/>
<line x1="1183.5" y1="145" x2="1183.5" y2="500" stroke="#808080" stroke-width="1" stroke-dasharray="3 3"/>
<rect x="1183" y="502" width="1" height="3" fill="#c0c0c0"/>
<rect x="1206" y="502" width="1" height="7" fill="#c0c0c0"/>
<line x1="54" y1="177.5" x2="1203" y2="177.5" stroke="#808080" stroke-width="1" stroke-dasharray="3 3"/>
<line x1="54" y1="210.5" x2="1203" y2="210.5" stroke="#808080" stroke-width="1" stroke-dasharray="3 3"/>
<line x1="54" y1="242.5" x2="1203" y2="242.5" stroke="#808080" stroke-width="1" stroke-dasharray="3 3"/>
<line x1="54" y1="274.5" x2="1203" y2="274.5" stroke="#808080" stroke-width="1" stroke-dasharray="3 3"/>
<line x1="54" y1="307.5" x2="1203" y2="307.5" stroke="#808080" stroke-width="1" stroke-dasharray="3 3"/>
<line x1="54" y1="339.5" x2="1203" y2="339.5" stroke="#808080" stroke-width="1" stroke-dasharray="3 3"/>
<line x1="54" y1="372.5" x2="1203" y2="372.5" stroke="#808080" stroke-width="1" stroke-dasharray="3 3"/>
<line x1="54" y1="404.5" x2="1203" y2="404.5" stroke="#808080" stroke-width="1" stroke-dasharray="3 3"/>
<line x1="54" y1="436.5" x2="1203" y2="436.5" stroke="#808080" stroke-width="1" stroke-dasharray="3 3"/>
<line x1="54" y1="469.5" x2="1203" y2="469.5" stroke="#808080" stroke-width="1" stroke-dasharray="3 3"/>
<rect x="47" y="145" width="7" height="1" fill="#c0c0c0"/>
<text x="46" y="150" font-size="13" font-weight="bold" fill="#c0c0c0" text-anchor="end" textLength="32.75" lengthAdjust="spacingAndGlyphs">10dB</text>
<rect x="47" y="177" width="7" height="1" fill="#c0c0c0"/>
<text x="46" y="182" font-size="13" font-weight="bold" fill="#c0c0c0" text-anchor="end" textLength="25.30" lengthAdjust="spacingAndGlyphs">5dB</text>
<rect x="47" y="210" width="7" height="1" fill="#c0c0c0"/>
<text x="46" y="215" font-size="13" font-weight="bold" fill="#c0c0c0" text-anchor="end" textLength="25.30" lengthAdjust="spacingAndGlyphs">0dB</text>
<rect x="47" y="242" width="7" height="1" fill="#c0c0c0"/>
<text x="46" y="247" font-size="13" font-weight="bold" fill="#c0c0c0" text-anchor="end" textLength="30.18" lengthAdjust="spacingAndGlyphs">-5dB</text>
<rect x="47" y="274" width="7" height="1" fill="#c0c0c0"/>
<text x="46" y="279" font-size="13" font-weight="bold" fill="#c0c0c0" text-anchor="end" textLength="37.21" lengthAdjust="spacingAndGlyphs">-10dB</text>
<rect x="47" y="307" width="7" height="1" fill="#c0c0c0"/>
<text x="46" y="312" font-size="13" font-weight="bold" fill="#c0c0c0" text-anchor="end" textLength="37.21" lengthAdjust="spacingAndGlyphs">-15dB</text>
<rect x="47" y="339" width="7" height="1" fill="#c0c0c0"/>
<text x="46" y="344" font-size="13" font-weight="bold" fill="#c0c0c0" text-anchor="end" textLength="37.21" lengthAdjust="spacingAndGlyphs">-20dB</text>
<rect x="47" y="372" width="7" height="1" fill="#c0c0c0"/>
<text x="46" y="377" font-size="13" font-weight="bold" fill="#c0c0c0" text-anchor="end" textLength="37.21" lengthAdjust="spacingAndGlyphs">-25dB</text>
<rect x="47" y="404" width="7" height="1" fill="#c0c0c0"/>
<text x="46" y="409" font-size="13" font-weight="bold" fill="#c0c0c0" text-anchor="end" textLength="37.21" lengthAdjust="spacingAndGlyphs">-30dB</text>
<rect x="47" y="436" width="7" height="1" fill="#c0c0c0"/>
<text x="46" y="441" font-size="13" font-weight="bold" fill="#c0c0c0" text-anchor="end" textLength="37.21" lengthAdjust="spacingAndGlyphs">-35dB</text>
<rect x="47" y="469" width="7" height="1" fill="#c0c0c0"/>
<text x="46" y="474" font-size="13" font-weight="bold" fill="#c0c0c0" text-anchor="end" textLength="37.21" lengthAdjust="spacingAndGlyphs">-40dB</text>
<rect x="47" y="501" width="7" height="1" fill="#c0c0c0"/>
<text x="46" y="506" font-size="13" font-weight="bold" fill="#c0c0c0" text-anchor="end" textLength="37.21" lengthAdjust="spacingAndGlyphs">-45dB</text>
<rect x="54" y="145" width="1153" height="1" fill="#c0c0c0"/>
<rect x="54" y="501" width="1153" height="1" fill="#c0c0c0"/>
<rect x="54" y="145" width="1" height="357" fill="#c0c0c0"/>
<rect x="1206" y="145" width="1" height="357" fill="#c0c0c0"/>
<text x="192.71" y="522" font-size="13" font-weight="bold" fill="#c0c0c0" textLength="25" lengthAdjust="spacingAndGlyphs">1Hz</text>
<text x="689.60" y="522" font-size="13" font-weight="bold" fill="#c0c0c0" textLength="32.5" lengthAdjust="spacingAndGlyphs">10Hz</text>
<text x="1185.85" y="522" font-size="13" font-weight="bold" fill="#c0c0c0" textLength="41.3" lengthAdjust="spacingAndGlyphs">100Hz</text>
<text x="316" y="140" font-size="13" font-weight="bold" fill="#00ff00" textLength="51" lengthAdjust="spacingAndGlyphs">V(vout1)</text>
<text x="892" y="140" font-size="13" font-weight="bold" fill="#0000ff" textLength="51" lengthAdjust="spacingAndGlyphs">V(vout2)</text>
<polyline points="54.00,486.47 56.88,485.73 59.76,484.99 62.64,484.25 65.52,483.52 68.40,482.78 71.28,482.04 74.16,481.31 77.04,480.57 79.92,479.84 82.80,479.10 85.68,478.36 88.56,477.63 91.44,476.89 94.32,476.16 97.20,475.43 100.08,474.69 102.96,473.96 105.84,473.22 108.72,472.49 111.60,471.76 114.48,471.03 117.36,470.29 120.24,469.56 123.12,468.83 126.00,468.10 128.88,467.37 131.76,466.64 134.64,465.91 137.52,465.18 140.40,464.45 143.28,463.72 146.16,462.99 149.04,462.26 151.92,461.54 154.80,460.81 157.68,460.08 160.56,459.36 163.44,458.63 166.32,457.91 169.20,457.18 172.08,456.46 174.96,455.73 177.84,455.01 180.72,454.29 183.60,453.57 186.48,452.84 189.36,452.12 192.24,451.40 195.12,450.69 198.00,449.97 200.88,449.25 203.76,448.53 206.64,447.81 209.52,447.10 212.40,446.38 215.28,445.67 218.16,444.96 221.04,444.24 223.92,443.53 226.80,442.82 229.68,442.11 232.56,441.40 235.44,440.69 238.32,439.99 241.20,439.28 244.08,438.57 246.96,437.87 249.84,437.17 252.72,436.47 255.60,435.76 258.48,435.06 261.36,434.37 264.24,433.67 267.12,432.97 270.00,432.28 272.88,431.58 275.76,430.89 278.64,430.20 281.52,429.51 284.40,428.82 287.28,428.14 290.16,427.45 293.04,426.77 295.92,426.08 298.80,425.40 301.68,424.72 304.56,424.05 307.44,423.37 310.32,422.70 313.20,422.03 316.08,421.36 318.96,420.69 321.84,420.02 324.72,419.36 327.60,418.69 330.48,418.03 333.36,417.38 336.24,416.72 339.12,416.07 342.00,415.42 344.88,414.77 347.76,414.12 350.64,413.48 353.52,412.84 356.40,412.20 359.28,411.56 362.16,410.93 365.04,410.30 367.92,409.67 370.80,409.04 373.68,408.42 376.56,407.80 379.44,407.18 382.32,406.57 385.20,405.96 388.08,405.36 390.96,404.75 393.84,404.15 396.72,403.56 399.60,402.96 402.48,402.37 405.36,401.79 408.24,401.21 411.12,400.63 414.00,400.06 416.88,399.49 419.76,398.92 422.64,398.36 425.52,397.80 428.40,397.25 431.28,396.70 434.16,396.16 437.04,395.62 439.92,395.09 442.80,394.56 445.68,394.03 448.56,393.51 451.44,393.00 454.32,392.49 457.20,391.99 460.08,391.49 462.96,391.00 465.84,390.51 468.72,390.03 471.60,389.55 474.48,389.08 477.36,388.62 480.24,388.16 483.12,387.71 486.00,387.27 488.88,386.83 491.76,386.39 494.64,385.97 497.52,385.55 500.40,385.14 503.28,384.73 506.16,384.33 509.04,383.94 511.92,383.56 514.80,383.18 517.68,382.81 520.56,382.45 523.44,382.10 526.32,381.75 529.20,381.41 532.08,381.08 534.96,380.76 537.84,380.44 540.72,380.14 543.60,379.84 546.48,379.55 549.36,379.26 552.24,378.99 555.12,378.73 558.00,378.47 560.88,378.22 563.76,377.98 566.64,377.75 569.52,377.53 572.40,377.32 575.28,377.12 578.16,376.93 581.04,376.74 583.92,376.57 586.80,376.40 589.68,376.25 592.56,376.10 595.44,375.96 598.32,375.83 601.20,375.72 604.08,375.61 606.96,375.51 609.84,375.42 612.72,375.34 615.60,375.27 618.48,375.21 621.36,375.16 624.24,375.12 627.12,375.09 630.00,375.07 632.88,375.06 635.76,375.06 638.64,375.07 641.52,375.09 644.40,375.12 647.28,375.15 650.16,375.20 653.04,375.26 655.92,375.33 658.80,375.41 661.68,375.50 664.56,375.59 667.44,375.70 670.32,375.82 673.20,375.94 676.08,376.08 678.96,376.22 681.84,376.38 684.72,376.54 687.60,376.72 690.48,376.90 693.36,377.09 696.24,377.29 699.12,377.50 702.00,377.72 704.88,377.95 707.76,378.19 710.64,378.44 713.52,378.69 716.40,378.95 719.28,379.23 722.16,379.51 725.04,379.80 727.92,380.09 730.80,380.40 733.68,380.71 736.56,381.03 739.44,381.36 742.32,381.70 745.20,382.05 748.08,382.40 750.96,382.76 753.84,383.13 756.72,383.51 759.60,383.89 762.48,384.28 765.36,384.68 768.24,385.08 771.12,385.49 774.00,385.91 776.88,386.34 779.76,386.77 782.64,387.20 785.52,387.65 788.40,388.10 791.28,388.56 794.16,389.02 797.04,389.49 799.92,389.96 802.80,390.44 805.68,390.93 808.56,391.42 811.44,391.92 814.32,392.42 817.20,392.93 820.08,393.44 822.96,393.96 825.84,394.49 828.72,395.01 831.60,395.55 834.48,396.09 837.36,396.63 840.24,397.18 843.12,397.73 846.00,398.28 848.88,398.84 851.76,399.41 854.64,399.98 857.52,400.55 860.40,401.13 863.28,401.71 866.16,402.29 869.04,402.88 871.92,403.47 874.80,404.07 877.68,404.67 880.56,405.27 883.44,405.88 886.32,406.49 889.20,407.10 892.08,407.72 894.96,408.33 897.84,408.96 900.72,409.58 903.60,410.21 906.48,410.84 909.36,411.47 912.24,412.11 915.12,412.75 918.00,413.39 920.88,414.03 923.76,414.68 926.64,415.33 929.52,415.98 932.40,416.63 935.28,417.29 938.16,417.94 941.04,418.60 943.92,419.27 946.80,419.93 949.68,420.60 952.56,421.26 955.44,421.93 958.32,422.60 961.20,423.28 964.08,423.95 966.96,424.63 969.84,425.31 972.72,425.99 975.60,426.67 978.48,427.36 981.36,428.04 984.24,428.73 987.12,429.41 990.00,430.10 992.88,430.80 995.76,431.49 998.64,432.18 1001.52,432.88 1004.40,433.57 1007.28,434.27 1010.16,434.97 1013.04,435.67 1015.92,436.37 1018.80,437.07 1021.68,437.77 1024.56,438.48 1027.44,439.18 1030.32,439.89 1033.20,440.60 1036.08,441.30 1038.96,442.01 1041.84,442.72 1044.72,443.43 1047.60,444.15 1050.48,444.86 1053.36,445.57 1056.24,446.29 1059.12,447.00 1062.00,447.72 1064.88,448.43 1067.76,449.15 1070.64,449.87 1073.52,450.59 1076.40,451.31 1079.28,452.02 1082.16,452.75 1085.04,453.47 1087.92,454.19 1090.80,454.91 1093.68,455.63 1096.56,456.36 1099.44,457.08 1102.32,457.81 1105.20,458.53 1108.08,459.26 1110.96,459.98 1113.84,460.71 1116.72,461.44 1119.60,462.16 1122.48,462.89 1125.36,463.62 1128.24,464.35 1131.12,465.08 1134.00,465.81 1136.88,466.54 1139.76,467.27 1142.64,468.00 1145.52,468.73 1148.40,469.46 1151.28,470.19 1154.16,470.92 1157.04,471.66 1159.92,472.39 1162.80,473.12 1165.68,473.86 1168.56,474.59 1171.44,475.32 1174.32,476.06 1177.20,476.79 1180.08,477.53 1182.96,478.26 1185.84,479.00 1188.72,479.73 1191.60,480.47 1194.48,481.21 1197.36,481.94 1200.24,482.68 1203.12,483.41 1206.00,484.15" fill="none" stroke="#00ff00" stroke-width="1"/>
<polyline points="54.00,351.87 56.88,350.41 59.76,348.95 62.64,347.49 65.52,346.03 68.40,344.57 71.28,343.11 74.16,341.65 77.04,340.20 79.92,338.74 82.80,337.29 85.68,335.83 88.56,334.38 91.44,332.93 94.32,331.47 97.20,330.02 100.08,328.58 102.96,327.13 105.84,325.68 108.72,324.23 111.60,322.79 114.48,321.34 117.36,319.90 120.24,318.46 123.12,317.02 126.00,315.58 128.88,314.14 131.76,312.71 134.64,311.27 137.52,309.84 140.40,308.41 143.28,306.98 146.16,305.55 149.04,304.12 151.92,302.70 154.80,301.27 157.68,299.85 160.56,298.43 163.44,297.01 166.32,295.59 169.20,294.18 172.08,292.76 174.96,291.35 177.84,289.94 180.72,288.54 183.60,287.13 186.48,285.73 189.36,284.33 192.24,282.93 195.12,281.53 198.00,280.14 200.88,278.75 203.76,277.36 206.64,275.97 209.52,274.59 212.40,273.21 215.28,271.83 218.16,270.46 221.04,269.08 223.92,267.71 226.80,266.35 229.68,264.98 232.56,263.62 235.44,262.27 238.32,260.91 241.20,259.56 244.08,258.21 246.96,256.87 249.84,255.53 252.72,254.19 255.60,252.86 258.48,251.53 261.36,250.21 264.24,248.89 267.12,247.57 270.00,246.26 272.88,244.95 275.76,243.65 278.64,242.35 281.52,241.05 284.40,239.76 287.28,238.48 290.16,237.20 293.04,235.92 295.92,234.65 298.80,233.39 301.68,232.13 304.56,230.88 307.44,229.63 310.32,228.38 313.20,227.15 316.08,225.92 318.96,224.69 321.84,223.47 324.72,222.26 327.60,221.05 330.48,219.85 333.36,218.66 336.24,217.47 339.12,216.29 342.00,215.12 344.88,213.96 347.76,212.80 350.64,211.65 353.52,210.51 356.40,209.37 359.28,208.24 362.16,207.12 365.04,206.01 367.92,204.91 370.80,203.81 373.68,202.73 376.56,201.65 379.44,200.58 382.32,199.52 385.20,198.47 388.08,197.43 390.96,196.40 393.84,195.38 396.72,194.36 399.60,193.36 402.48,192.37 405.36,191.39 408.24,190.42 411.12,189.45 414.00,188.50 416.88,187.56 419.76,186.64 422.64,185.72 425.52,184.81 428.40,183.92 431.28,183.03 434.16,182.16 437.04,181.30 439.92,180.46 442.80,179.62 445.68,178.80 448.56,177.99 451.44,177.19 454.32,176.41 457.20,175.64 460.08,174.88 462.96,174.14 465.84,173.40 468.72,172.69 471.60,171.98 474.48,171.29 477.36,170.62 480.24,169.96 483.12,169.31 486.00,168.68 488.88,168.06 491.76,167.46 494.64,166.88 497.52,166.30 500.40,165.75 503.28,165.21 506.16,164.68 509.04,164.17 511.92,163.68 514.80,163.20 517.68,162.74 520.56,162.30 523.44,161.87 526.32,161.46 529.20,161.06 532.08,160.68 534.96,160.32 537.84,159.98 540.72,159.65 543.60,159.34 546.48,159.05 549.36,158.77 552.24,158.51 555.12,158.27 558.00,158.05 560.88,157.85 563.76,157.66 566.64,157.49 569.52,157.34 572.40,157.21 575.28,157.09 578.16,157.00 581.04,156.92 583.92,156.86 586.80,156.82 589.68,156.80 592.56,156.80 595.44,156.81 598.32,156.85 601.20,156.90 604.08,156.97 606.96,157.06 609.84,157.17 612.72,157.30 615.60,157.44 618.48,157.61 621.36,157.79 624.24,158.00 627.12,158.22 630.00,158.46 632.88,158.72 635.76,159.00 638.64,159.29 641.52,159.61 644.40,159.94 647.28,160.29 650.16,160.67 653.04,161.05 655.92,161.46 658.80,161.89 661.68,162.33 664.56,162.80 667.44,163.28 670.32,163.78 673.20,164.30 676.08,164.83 678.96,165.39 681.84,165.96 684.72,166.55 687.60,167.15 690.48,167.78 693.36,168.42 696.24,169.08 699.12,169.75 702.00,170.45 704.88,171.16 707.76,171.89 710.64,172.63 713.52,173.39 716.40,174.17 719.28,174.96 722.16,175.77 725.04,176.60 727.92,177.44 730.80,178.30 733.68,179.18 736.56,180.07 739.44,180.97 742.32,181.89 745.20,182.83 748.08,183.78 750.96,184.75 753.84,185.73 756.72,186.73 759.60,187.74 762.48,188.76 765.36,189.80 768.24,190.86 771.12,191.93 774.00,193.01 776.88,194.11 779.76,195.22 782.64,196.34 785.52,197.48 788.40,198.63 791.28,199.80 794.16,200.97 797.04,202.17 799.92,203.37 802.80,204.59 805.68,205.81 808.56,207.06 811.44,208.31 814.32,209.58 817.20,210.86 820.08,212.15 822.96,213.45 825.84,214.77 828.72,216.09 831.60,217.43 834.48,218.78 837.36,220.14 840.24,221.51 843.12,222.90 846.00,224.29 848.88,225.70 851.76,227.12 854.64,228.55 857.52,229.99 860.40,231.44 863.28,232.90 866.16,234.37 869.04,235.85 871.92,237.34 874.80,238.84 877.68,240.35 880.56,241.88 883.44,243.41 886.32,244.95 889.20,246.50 892.08,248.06 894.96,249.64 897.84,251.22 900.72,252.81 903.60,254.41 906.48,256.02 909.36,257.63 912.24,259.26 915.12,260.90 918.00,262.54 920.88,264.20 923.76,265.86 926.64,267.53 929.52,269.22 932.40,270.91 935.28,272.60 938.16,274.31 941.04,276.03 943.92,277.75 946.80,279.48 949.68,281.22 952.56,282.97 955.44,284.72 958.32,286.49 961.20,288.26 964.08,290.04 966.96,291.83 969.84,293.62 972.72,295.42 975.60,297.23 978.48,299.05 981.36,300.88 984.24,302.71 987.12,304.55 990.00,306.39 992.88,308.25 995.76,310.10 998.64,311.97 1001.52,313.84 1004.40,315.72 1007.28,317.61 1010.16,319.50 1013.04,321.40 1015.92,323.31 1018.80,325.22 1021.68,327.14 1024.56,329.06 1027.44,330.99 1030.32,332.93 1033.20,334.87 1036.08,336.82 1038.96,338.77 1041.84,340.73 1044.72,342.70 1047.60,344.67 1050.48,346.64 1053.36,348.62 1056.24,350.61 1059.12,352.60 1062.00,354.60 1064.88,356.60 1067.76,358.60 1070.64,360.61 1073.52,362.63 1076.40,364.65 1079.28,366.67 1082.16,368.70 1085.04,370.73 1087.92,372.77 1090.80,374.81 1093.68,376.86 1096.56,378.91 1099.44,380.96 1102.32,383.02 1105.20,385.08 1108.08,387.15 1110.96,389.22 1113.84,391.29 1116.72,393.37 1119.60,395.45 1122.48,397.53 1125.36,399.62 1128.24,401.71 1131.12,403.80 1134.00,405.90 1136.88,408.00 1139.76,410.10 1142.64,412.21 1145.52,414.32 1148.40,416.43 1151.28,418.55 1154.16,420.66 1157.04,422.78 1159.92,424.91 1162.80,427.03 1165.68,429.16 1168.56,431.29 1171.44,433.43 1174.32,435.56 1177.20,437.70 1180.08,439.84 1182.96,441.98 1185.84,444.13 1188.72,446.27 1191.60,448.42 1194.48,450.57 1197.36,452.73 1200.24,454.88 1203.12,457.04 1206.00,459.20" fill="none" stroke="#0000ff" stroke-width="1"/>
<rect x="2" y="533" width="1276" height="431" fill="#d4d0c8"/>
<rect x="2" y="533" width="1276" height="1" fill="#d4d0c8"/>
<rect x="2" y="533" width="1" height="431" fill="#d4d0c8"/>
<rect x="3" y="534" width="1274" height="1" fill="#ffffff"/>
<rect x="3" y="534" width="1" height="429" fill="#ffffff"/>
<rect x="2" y="963" width="1276" height="1" fill="#404040"/>
<rect x="1277" y="533" width="1" height="431" fill="#404040"/>
<rect x="3" y="962" width="1274" height="1" fill="#808080"/>
<rect x="1276" y="534" width="1" height="429" fill="#808080"/>
<rect x="3" y="533" width="1273" height="1" fill="#ffffff"/>
<rect x="6" y="537" width="1268" height="18" fill="url(#gAct)"/>
<rect x="10" y="545" width="3" height="1" fill="#0000ff"/>
<rect x="13" y="541" width="2" height="9" fill="#0000ff"/>
<rect x="15" y="542" width="1" height="1" fill="#0000ff"/>
<rect x="16" y="541" width="1" height="1" fill="#0000ff"/>
<rect x="17" y="540" width="1" height="1" fill="#0000ff"/>
<rect x="18" y="539" width="1" height="1" fill="#0000ff"/>
<rect x="19" y="538" width="1" height="1" fill="#0000ff"/>
<rect x="15" y="548" width="1" height="1" fill="#0000ff"/>
<rect x="16" y="549" width="1" height="1" fill="#0000ff"/>
<rect x="17" y="550" width="1" height="1" fill="#0000ff"/>
<rect x="18" y="551" width="1" height="1" fill="#0000ff"/>
<rect x="19" y="552" width="1" height="1" fill="#0000ff"/>
<rect x="20" y="553" width="1" height="1" fill="#0000ff"/>
<rect x="16" y="551" width="3" height="1" fill="#0000ff"/><rect x="18" y="549" width="1" height="3" fill="#0000ff"/><rect x="17" y="550" width="2" height="2" fill="#0000ff"/>
<text x="26" y="551" font-size="11" fill="#ffffff" font-weight="normal" text-anchor="start" textLength="69" lengthAdjust="spacingAndGlyphs" shape-rendering="geometricPrecision">swl-mod.asc</text>
<rect x="1222" y="539" width="16" height="14" fill="#d4d0c8"/>
<rect x="1222" y="539" width="16" height="1" fill="#ffffff"/>
<rect x="1222" y="539" width="1" height="14" fill="#ffffff"/>
<rect x="1222" y="552" width="16" height="1" fill="#404040"/>
<rect x="1237" y="539" width="1" height="14" fill="#404040"/>
<rect x="1223" y="551" width="14" height="1" fill="#808080"/>
<rect x="1236" y="540" width="1" height="12" fill="#808080"/>
<rect x="1226" y="549" width="6" height="2" fill="#000"/>
<rect x="1238" y="539" width="16" height="14" fill="#d4d0c8"/>
<rect x="1238" y="539" width="16" height="1" fill="#ffffff"/>
<rect x="1238" y="539" width="1" height="14" fill="#ffffff"/>
<rect x="1238" y="552" width="16" height="1" fill="#404040"/>
<rect x="1253" y="539" width="1" height="14" fill="#404040"/>
<rect x="1239" y="551" width="14" height="1" fill="#808080"/>
<rect x="1252" y="540" width="1" height="12" fill="#808080"/>
<rect x="1241" y="542" width="9" height="9" fill="#000"/>
<rect x="1242" y="544" width="7" height="6" fill="#d4d0c8"/>
<rect x="1256" y="539" width="16" height="14" fill="#d4d0c8"/>
<rect x="1256" y="539" width="16" height="1" fill="#ffffff"/>
<rect x="1256" y="539" width="1" height="14" fill="#ffffff"/>
<rect x="1256" y="552" width="16" height="1" fill="#404040"/>
<rect x="1271" y="539" width="1" height="14" fill="#404040"/>
<rect x="1257" y="551" width="14" height="1" fill="#808080"/>
<rect x="1270" y="540" width="1" height="12" fill="#808080"/>
<path d="M1260,542 L1268,550 M1268,542 L1260,550" stroke="#000" stroke-width="1.5" shape-rendering="geometricPrecision"/>
<rect x="6" y="556" width="1268" height="1" fill="#808080"/>
<rect x="6" y="556" width="1" height="404" fill="#808080"/>
<rect x="7" y="557" width="1266" height="1" fill="#404040"/>
<rect x="7" y="557" width="1" height="402" fill="#404040"/>
<rect x="6" y="959" width="1268" height="1" fill="#ffffff"/>
<rect x="1273" y="556" width="1" height="404" fill="#ffffff"/>
<rect x="7" y="958" width="1266" height="1" fill="#d4d0c8"/>
<rect x="1272" y="557" width="1" height="402" fill="#d4d0c8"/>
<rect x="8" y="558" width="1248" height="400" fill="#c0c0c0"/>
<rect x="1256" y="558" width="16" height="400" fill="url(#chk)"/>
<rect x="1256" y="558" width="16" height="16" fill="#d4d0c8"/>
<rect x="1256" y="558" width="16" height="1" fill="#ffffff"/>
<rect x="1256" y="558" width="1" height="16" fill="#ffffff"/>
<rect x="1256" y="573" width="16" height="1" fill="#404040"/>
<rect x="1271" y="558" width="1" height="16" fill="#404040"/>
<rect x="1257" y="572" width="14" height="1" fill="#808080"/>
<rect x="1270" y="559" width="1" height="14" fill="#808080"/>
<path d="M1259.5,567 L1268.5,567 L1264,562.5 Z" fill="#000" shape-rendering="geometricPrecision"/>
<rect x="1256" y="603" width="16" height="320" fill="#d4d0c8"/>
<rect x="1256" y="603" width="16" height="1" fill="#ffffff"/>
<rect x="1256" y="603" width="1" height="320" fill="#ffffff"/>
<rect x="1256" y="922" width="16" height="1" fill="#404040"/>
<rect x="1271" y="603" width="1" height="320" fill="#404040"/>
<rect x="1257" y="921" width="14" height="1" fill="#808080"/>
<rect x="1270" y="604" width="1" height="318" fill="#808080"/>
<rect x="1256" y="942" width="16" height="16" fill="#d4d0c8"/>
<rect x="1256" y="942" width="16" height="1" fill="#ffffff"/>
<rect x="1256" y="942" width="1" height="16" fill="#ffffff"/>
<rect x="1256" y="957" width="16" height="1" fill="#404040"/>
<rect x="1271" y="942" width="1" height="16" fill="#404040"/>
<rect x="1257" y="956" width="14" height="1" fill="#808080"/>
<rect x="1270" y="943" width="1" height="14" fill="#808080"/>
<path d="M1260,948 L1268,948 L1264,952 Z" fill="#000" shape-rendering="geometricPrecision"/>
<defs><clipPath id="cvclip"><rect x="8" y="558" width="1248" height="400"/></clipPath></defs><circle cx="463.0" cy="565" r="11" fill="none" stroke="#000080" stroke-width="1" clip-path="url(#cvclip)"/>
<path fill="#000080" d="M460 558h7v1h-7zM463 558h1v4h-1zM460 573h7v1h-7zM505 558h7v1h-7zM508 558h1v4h-1zM505 573h7v1h-7zM724 659h10v1h-10zM736 659h10v1h-10zM733 653h1v13h-1zM736 653h1v13h-1zM770 659h2v1h-2zM771 659h1v1h-1zM772 658h1v1h-1zM772 657h1v1h-1zM773 656h1v1h-1zM773 655h1v1h-1zM774 654h1v1h-1zM774 653h1v1h-1zM774 653h1v1h-1zM775 654h1v1h-1zM775 655h1v1h-1zM776 656h1v1h-1zM776 657h1v1h-1zM777 658h1v1h-1zM777 659h1v1h-1zM778 660h1v1h-1zM778 661h1v1h-1zM779 662h1v1h-1zM779 663h1v1h-1zM780 664h1v1h-1zM780 665h1v1h-1zM780 665h1v1h-1zM781 664h1v1h-1zM781 663h1v1h-1zM782 662h1v1h-1zM782 661h1v1h-1zM783 660h1v1h-1zM783 659h1v1h-1zM784 658h1v1h-1zM784 657h1v1h-1zM785 656h1v1h-1zM785 655h1v1h-1zM786 654h1v1h-1zM786 653h1v1h-1zM786 653h1v1h-1zM786 654h1v1h-1zM787 655h1v1h-1zM787 656h1v1h-1zM788 657h1v1h-1zM788 658h1v1h-1zM789 659h1v1h-1zM789 660h1v1h-1zM789 661h1v1h-1zM790 662h1v1h-1zM790 663h1v1h-1zM791 664h1v1h-1zM791 665h1v1h-1zM791 665h1v1h-1zM792 664h1v1h-1zM792 663h1v1h-1zM793 662h1v1h-1zM793 661h1v1h-1zM794 660h1v1h-1zM794 659h1v1h-1zM794 659h3v1h-3zM832 574h2v1h-2zM833 574h1v1h-1zM834 573h1v1h-1zM834 572h1v1h-1zM835 571h1v1h-1zM835 570h1v1h-1zM836 569h1v1h-1zM836 568h1v1h-1zM836 568h1v1h-1zM837 569h1v1h-1zM837 570h1v1h-1zM838 571h1v1h-1zM838 572h1v1h-1zM839 573h1v1h-1zM839 574h1v1h-1zM840 575h1v1h-1zM840 576h1v1h-1zM841 577h1v1h-1zM841 578h1v1h-1zM842 579h1v1h-1zM842 580h1v1h-1zM842 580h1v1h-1zM843 579h1v1h-1zM843 578h1v1h-1zM844 577h1v1h-1zM844 576h1v1h-1zM845 575h1v1h-1zM845 574h1v1h-1zM846 573h1v1h-1zM846 572h1v1h-1zM847 571h1v1h-1zM847 570h1v1h-1zM848 569h1v1h-1zM848 568h1v1h-1zM848 568h1v1h-1zM848 569h1v1h-1zM849 570h1v1h-1zM849 571h1v1h-1zM850 572h1v1h-1zM850 573h1v1h-1zM851 574h1v1h-1zM851 575h1v1h-1zM851 576h1v1h-1zM852 577h1v1h-1zM852 578h1v1h-1zM853 579h1v1h-1zM853 580h1v1h-1zM853 580h1v1h-1zM854 579h1v1h-1zM854 578h1v1h-1zM855 577h1v1h-1zM855 576h1v1h-1zM856 575h1v1h-1zM856 574h1v1h-1zM856 574h3v1h-3zM832 614h10v1h-10zM844 614h10v1h-10zM841 608h1v13h-1zM844 608h1v13h-1zM831 653h1v24h-1zM831 653h1v1h-1zM832 654h2v1h-2zM834 655h2v1h-2zM836 656h2v1h-2zM838 657h2v1h-2zM840 658h2v1h-2zM842 659h2v1h-2zM844 660h2v1h-2zM846 661h2v1h-2zM848 662h2v1h-2zM850 663h2v1h-2zM852 664h2v1h-2zM854 665h1v1h-1zM831 676h2v1h-2zM833 675h2v1h-2zM835 674h2v1h-2zM837 673h2v1h-2zM839 672h2v1h-2zM841 671h2v1h-2zM843 670h2v1h-2zM845 669h2v1h-2zM847 668h2v1h-2zM849 667h2v1h-2zM851 666h2v1h-2zM853 665h2v1h-2zM831 659h6v1h-6zM831 670h6v1h-6zM834 668h1v5h-1zM842 655h1v5h-1zM843 658h5v1h-5zM845 656h1v5h-1zM842 671h1v5h-1zM844 672h4v1h-4zM367 840h10v1h-10zM379 840h10v1h-10zM376 834h1v13h-1zM379 834h1v13h-1zM413 840h2v1h-2zM414 840h1v1h-1zM415 839h1v1h-1zM415 838h1v1h-1zM416 837h1v1h-1zM416 836h1v1h-1zM417 835h1v1h-1zM417 834h1v1h-1zM417 834h1v1h-1zM418 835h1v1h-1zM418 836h1v1h-1zM419 837h1v1h-1zM419 838h1v1h-1zM420 839h1v1h-1zM420 840h1v1h-1zM421 841h1v1h-1zM421 842h1v1h-1zM422 843h1v1h-1zM422 844h1v1h-1zM423 845h1v1h-1zM423 846h1v1h-1zM423 846h1v1h-1zM424 845h1v1h-1zM424 844h1v1h-1zM425 843h1v1h-1zM425 842h1v1h-1zM426 841h1v1h-1zM426 840h1v1h-1zM427 839h1v1h-1zM427 838h1v1h-1zM428 837h1v1h-1zM428 836h1v1h-1zM429 835h1v1h-1zM429 834h1v1h-1zM429 834h1v1h-1zM429 835h1v1h-1zM430 836h1v1h-1zM430 837h1v1h-1zM431 838h1v1h-1zM431 839h1v1h-1zM432 840h1v1h-1zM432 841h1v1h-1zM432 842h1v1h-1zM433 843h1v1h-1zM433 844h1v1h-1zM434 845h1v1h-1zM434 846h1v1h-1zM434 846h1v1h-1zM435 845h1v1h-1zM435 844h1v1h-1zM436 843h1v1h-1zM436 842h1v1h-1zM437 841h1v1h-1zM437 840h1v1h-1zM437 840h3v1h-3zM475 755h2v1h-2zM476 755h1v1h-1zM477 754h1v1h-1zM477 753h1v1h-1zM478 752h1v1h-1zM478 751h1v1h-1zM479 750h1v1h-1zM479 749h1v1h-1zM479 749h1v1h-1zM480 750h1v1h-1zM480 751h1v1h-1zM481 752h1v1h-1zM481 753h1v1h-1zM482 754h1v1h-1zM482 755h1v1h-1zM483 756h1v1h-1zM483 757h1v1h-1zM484 758h1v1h-1zM484 759h1v1h-1zM485 760h1v1h-1zM485 761h1v1h-1zM485 761h1v1h-1zM486 760h1v1h-1zM486 759h1v1h-1zM487 758h1v1h-1zM487 757h1v1h-1zM488 756h1v1h-1zM488 755h1v1h-1zM489 754h1v1h-1zM489 753h1v1h-1zM490 752h1v1h-1zM490 751h1v1h-1zM491 750h1v1h-1zM491 749h1v1h-1zM491 749h1v1h-1zM491 750h1v1h-1zM492 751h1v1h-1zM492 752h1v1h-1zM493 753h1v1h-1zM493 754h1v1h-1zM494 755h1v1h-1zM494 756h1v1h-1zM494 757h1v1h-1zM495 758h1v1h-1zM495 759h1v1h-1zM496 760h1v1h-1zM496 761h1v1h-1zM496 761h1v1h-1zM497 760h1v1h-1zM497 759h1v1h-1zM498 758h1v1h-1zM498 757h1v1h-1zM499 756h1v1h-1zM499 755h1v1h-1zM499 755h3v1h-3zM475 795h10v1h-10zM487 795h10v1h-10zM484 789h1v13h-1zM487 789h1v13h-1zM474 835h1v23h-1zM474 835h1v1h-1zM475 836h2v1h-2zM477 837h2v1h-2zM479 838h2v1h-2zM481 839h2v1h-2zM483 840h2v1h-2zM485 841h2v1h-2zM487 842h2v1h-2zM489 843h2v1h-2zM491 844h2v1h-2zM493 845h2v1h-2zM495 846h2v1h-2zM474 857h1v1h-1zM475 856h2v1h-2zM477 855h2v1h-2zM479 854h2v1h-2zM481 853h2v1h-2zM483 852h2v1h-2zM485 851h2v1h-2zM487 850h2v1h-2zM489 849h2v1h-2zM491 848h2v1h-2zM493 847h2v1h-2zM495 846h2v1h-2zM474 840h6v1h-6zM474 852h6v1h-6zM477 850h1v5h-1zM485 836h1v5h-1zM486 839h5v1h-5zM488 837h1v5h-1zM485 852h1v5h-1zM487 853h4v1h-4zM413 891h2v1h-2zM414 891h1v1h-1zM415 890h1v1h-1zM415 889h1v1h-1zM416 888h1v1h-1zM416 887h1v1h-1zM417 886h1v1h-1zM417 885h1v1h-1zM417 885h1v1h-1zM418 886h1v1h-1zM418 887h1v1h-1zM419 888h1v1h-1zM419 889h1v1h-1zM420 890h1v1h-1zM420 891h1v1h-1zM421 892h1v1h-1zM421 893h1v1h-1zM422 894h1v1h-1zM422 895h1v1h-1zM423 896h1v1h-1zM423 897h1v1h-1zM423 897h1v1h-1zM424 896h1v1h-1zM424 895h1v1h-1zM425 894h1v1h-1zM425 893h1v1h-1zM426 892h1v1h-1zM426 891h1v1h-1zM427 890h1v1h-1zM427 889h1v1h-1zM428 888h1v1h-1zM428 887h1v1h-1zM429 886h1v1h-1zM429 885h1v1h-1zM429 885h1v1h-1zM429 886h1v1h-1zM430 887h1v1h-1zM430 888h1v1h-1zM431 889h1v1h-1zM431 890h1v1h-1zM432 891h1v1h-1zM432 892h1v1h-1zM432 893h1v1h-1zM433 894h1v1h-1zM433 895h1v1h-1zM434 896h1v1h-1zM434 897h1v1h-1zM434 897h1v1h-1zM435 896h1v1h-1zM435 895h1v1h-1zM436 894h1v1h-1zM436 893h1v1h-1zM437 892h1v1h-1zM437 891h1v1h-1zM437 891h3v1h-3zM457 904h1v1h-1zM457 905h1v1h-1zM457 906h1v1h-1zM457 906h1v1h-1zM458 907h1v1h-1zM458 907h3v1h-3zM460 907h1v1h-1zM461 908h1v1h-1zM461 908h3v1h-3zM463 908h1v1h-1zM461 909h2v1h-2zM459 910h2v1h-2zM457 911h2v1h-2zM455 912h2v1h-2zM453 913h2v1h-2zM451 914h2v1h-2zM451 914h1v1h-1zM452 915h2v1h-2zM454 916h2v1h-2zM456 917h2v1h-2zM458 918h2v1h-2zM460 919h2v1h-2zM462 920h2v1h-2zM462 920h2v1h-2zM460 921h2v1h-2zM458 922h2v1h-2zM455 923h3v1h-3zM453 924h2v1h-2zM451 925h2v1h-2zM451 925h1v1h-1zM452 926h2v1h-2zM454 927h2v1h-2zM456 928h2v1h-2zM457 928h1v1h-1zM457 929h1v1h-1zM457 930h1v1h-1zM508 904h1v10h-1zM508 915h1v10h-1zM502 913h14v1h-14zM502 915h14v1h-14zM566 846h2v1h-2zM567 846h1v1h-1zM568 845h1v1h-1zM568 844h1v1h-1zM569 843h1v1h-1zM569 842h1v1h-1zM570 841h1v1h-1zM570 840h1v1h-1zM570 840h1v1h-1zM571 841h1v1h-1zM571 842h1v1h-1zM572 843h1v1h-1zM572 844h1v1h-1zM573 845h1v1h-1zM573 846h1v1h-1zM574 847h1v1h-1zM574 848h1v1h-1zM575 849h1v1h-1zM575 850h1v1h-1zM576 851h1v1h-1zM576 852h1v1h-1zM576 852h1v1h-1zM577 851h1v1h-1zM577 850h1v1h-1zM578 849h1v1h-1zM578 848h1v1h-1zM579 847h1v1h-1zM579 846h1v1h-1zM580 845h1v1h-1zM580 844h1v1h-1zM581 843h1v1h-1zM581 842h1v1h-1zM582 841h1v1h-1zM582 840h1v1h-1zM582 840h1v1h-1zM582 841h1v1h-1zM583 842h1v1h-1zM583 843h1v1h-1zM584 844h1v1h-1zM584 845h1v1h-1zM585 846h1v1h-1zM585 847h1v1h-1zM585 848h1v1h-1zM586 849h1v1h-1zM586 850h1v1h-1zM587 851h1v1h-1zM587 852h1v1h-1zM587 852h1v1h-1zM588 851h1v1h-1zM588 850h1v1h-1zM589 849h1v1h-1zM589 848h1v1h-1zM590 847h1v1h-1zM590 846h1v1h-1zM590 846h3v1h-3zM639 755h2v1h-2zM640 755h1v1h-1zM641 754h1v1h-1zM641 753h1v1h-1zM642 752h1v1h-1zM642 751h1v1h-1zM643 750h1v1h-1zM643 749h1v1h-1zM643 749h1v1h-1zM644 750h1v1h-1zM644 751h1v1h-1zM645 752h1v1h-1zM645 753h1v1h-1zM646 754h1v1h-1zM646 755h1v1h-1zM647 756h1v1h-1zM647 757h1v1h-1zM648 758h1v1h-1zM648 759h1v1h-1zM649 760h1v1h-1zM649 761h1v1h-1zM649 761h1v1h-1zM650 760h1v1h-1zM650 759h1v1h-1zM651 758h1v1h-1zM651 757h1v1h-1zM652 756h1v1h-1zM652 755h1v1h-1zM653 754h1v1h-1zM653 753h1v1h-1zM654 752h1v1h-1zM654 751h1v1h-1zM655 750h1v1h-1zM655 749h1v1h-1zM655 749h1v1h-1zM655 750h1v1h-1zM656 751h1v1h-1zM656 752h1v1h-1zM657 753h1v1h-1zM657 754h1v1h-1zM658 755h1v1h-1zM658 756h1v1h-1zM658 757h1v1h-1zM659 758h1v1h-1zM659 759h1v1h-1zM660 760h1v1h-1zM660 761h1v1h-1zM660 761h1v1h-1zM661 760h1v1h-1zM661 759h1v1h-1zM662 758h1v1h-1zM662 757h1v1h-1zM663 756h1v1h-1zM663 755h1v1h-1zM663 755h3v1h-3zM639 795h10v1h-10zM651 795h10v1h-10zM648 789h1v13h-1zM651 789h1v13h-1zM638 840h1v24h-1zM638 840h1v1h-1zM639 841h2v1h-2zM641 842h2v1h-2zM643 843h2v1h-2zM645 844h2v1h-2zM647 845h2v1h-2zM649 846h2v1h-2zM651 847h2v1h-2zM653 848h2v1h-2zM655 849h2v1h-2zM657 850h2v1h-2zM659 851h2v1h-2zM661 852h1v1h-1zM638 863h2v1h-2zM640 862h2v1h-2zM642 861h2v1h-2zM644 860h2v1h-2zM646 859h2v1h-2zM648 858h2v1h-2zM650 857h2v1h-2zM652 856h2v1h-2zM654 855h2v1h-2zM656 854h2v1h-2zM658 853h2v1h-2zM660 852h2v1h-2zM638 846h6v1h-6zM638 857h6v1h-6zM641 855h1v5h-1zM650 842h1v5h-1zM651 845h5v1h-5zM653 843h1v5h-1zM650 858h1v5h-1zM652 859h4v1h-4zM725 852h10v1h-10zM737 852h10v1h-10zM734 846h1v13h-1zM737 846h1v13h-1zM772 852h2v1h-2zM773 852h1v1h-1zM774 851h1v1h-1zM774 850h1v1h-1zM775 849h1v1h-1zM775 848h1v1h-1zM776 847h1v1h-1zM776 846h1v1h-1zM776 846h1v1h-1zM777 847h1v1h-1zM777 848h1v1h-1zM778 849h1v1h-1zM778 850h1v1h-1zM779 851h1v1h-1zM779 852h1v1h-1zM780 853h1v1h-1zM780 854h1v1h-1zM781 855h1v1h-1zM781 856h1v1h-1zM782 857h1v1h-1zM782 858h1v1h-1zM782 858h1v1h-1zM783 857h1v1h-1zM783 856h1v1h-1zM784 855h1v1h-1zM784 854h1v1h-1zM785 853h1v1h-1zM785 852h1v1h-1zM786 851h1v1h-1zM786 850h1v1h-1zM787 849h1v1h-1zM787 848h1v1h-1zM788 847h1v1h-1zM788 846h1v1h-1zM788 846h1v1h-1zM788 847h1v1h-1zM789 848h1v1h-1zM789 849h1v1h-1zM790 850h1v1h-1zM790 851h1v1h-1zM791 852h1v1h-1zM791 853h1v1h-1zM791 854h1v1h-1zM792 855h1v1h-1zM792 856h1v1h-1zM793 857h1v1h-1zM793 858h1v1h-1zM793 858h1v1h-1zM794 857h1v1h-1zM794 856h1v1h-1zM795 855h1v1h-1zM795 854h1v1h-1zM796 853h1v1h-1zM796 852h1v1h-1zM796 852h3v1h-3zM833 767h2v1h-2zM834 767h1v1h-1zM835 766h1v1h-1zM835 765h1v1h-1zM836 764h1v1h-1zM836 763h1v1h-1zM837 762h1v1h-1zM837 761h1v1h-1zM837 761h1v1h-1zM838 762h1v1h-1zM838 763h1v1h-1zM839 764h1v1h-1zM839 765h1v1h-1zM840 766h1v1h-1zM840 767h1v1h-1zM841 768h1v1h-1zM841 769h1v1h-1zM842 770h1v1h-1zM842 771h1v1h-1zM843 772h1v1h-1zM843 773h1v1h-1zM843 773h1v1h-1zM844 772h1v1h-1zM844 771h1v1h-1zM845 770h1v1h-1zM845 769h1v1h-1zM846 768h1v1h-1zM846 767h1v1h-1zM847 766h1v1h-1zM847 765h1v1h-1zM848 764h1v1h-1zM848 763h1v1h-1zM849 762h1v1h-1zM849 761h1v1h-1zM849 761h1v1h-1zM849 762h1v1h-1zM850 763h1v1h-1zM850 764h1v1h-1zM851 765h1v1h-1zM851 766h1v1h-1zM852 767h1v1h-1zM852 768h1v1h-1zM852 769h1v1h-1zM853 770h1v1h-1zM853 771h1v1h-1zM854 772h1v1h-1zM854 773h1v1h-1zM854 773h1v1h-1zM855 772h1v1h-1zM855 771h1v1h-1zM856 770h1v1h-1zM856 769h1v1h-1zM857 768h1v1h-1zM857 767h1v1h-1zM857 767h3v1h-3zM832 806h10v1h-10zM844 806h10v1h-10zM841 800h1v13h-1zM844 800h1v13h-1zM831 846h1v24h-1zM831 846h2v1h-2zM833 847h2v1h-2zM835 848h2v1h-2zM837 849h2v1h-2zM839 850h2v1h-2zM841 851h2v1h-2zM843 852h2v1h-2zM845 853h2v1h-2zM847 854h2v1h-2zM849 855h2v1h-2zM851 856h2v1h-2zM853 857h2v1h-2zM831 869h1v1h-1zM832 868h2v1h-2zM834 867h2v1h-2zM836 866h2v1h-2zM838 865h2v1h-2zM840 864h2v1h-2zM842 863h2v1h-2zM844 862h2v1h-2zM846 861h2v1h-2zM848 860h2v1h-2zM850 859h2v1h-2zM852 858h2v1h-2zM854 857h1v1h-1zM831 852h6v1h-6zM831 863h6v1h-6zM834 861h1v5h-1zM842 848h1v5h-1zM843 851h5v1h-5zM845 849h1v5h-1zM842 864h1v5h-1zM844 865h4v1h-4z"/>
<path fill="#0000ff" d="M463 576h1v16h-1zM457 591h14v1h-14zM457 591h1v1h-1zM458 592h1v1h-1zM459 593h1v1h-1zM460 594h1v1h-1zM460 595h1v1h-1zM461 596h1v1h-1zM462 597h1v1h-1zM463 598h1v1h-1zM470 591h1v1h-1zM469 592h1v1h-1zM468 593h1v1h-1zM467 594h1v1h-1zM466 595h1v1h-1zM465 596h1v1h-1zM464 597h1v1h-1zM463 598h1v1h-1zM508 576h1v16h-1zM502 591h14v1h-14zM502 591h1v1h-1zM503 592h1v1h-1zM504 593h1v1h-1zM505 594h1v1h-1zM505 595h1v1h-1zM506 596h1v1h-1zM507 597h1v1h-1zM508 598h1v1h-1zM515 591h1v1h-1zM514 592h1v1h-1zM513 593h1v1h-1zM512 594h1v1h-1zM511 595h1v1h-1zM510 596h1v1h-1zM509 597h1v1h-1zM508 598h1v1h-1zM684 659h41v1h-41zM746 659h25v1h-25zM797 659h35v1h-35zM813 658h3v3h-3zM814 574h1v86h-1zM814 574h19v1h-19zM859 574h18v1h-18zM876 574h1v92h-1zM814 614h19v1h-19zM854 614h23v1h-23zM813 613h3v3h-3zM875 613h3v3h-3zM842 648h1v7h-1zM842 676h1v12h-1zM836 687h14v1h-14zM836 687h1v1h-1zM837 688h1v1h-1zM838 689h1v1h-1zM839 690h1v1h-1zM839 691h1v1h-1zM840 692h1v1h-1zM841 693h1v1h-1zM842 694h1v1h-1zM849 687h1v1h-1zM848 688h1v1h-1zM847 689h1v1h-1zM846 690h1v1h-1zM845 691h1v1h-1zM844 692h1v1h-1zM843 693h1v1h-1zM842 694h1v1h-1zM814 670h18v1h-18zM814 670h1v31h-1zM854 665h57v1h-57zM875 664h3v3h-3zM349 840h19v1h-19zM389 840h25v1h-25zM440 840h35v1h-35zM456 839h3v3h-3zM457 755h1v86h-1zM457 755h19v1h-19zM502 755h18v1h-18zM519 755h1v92h-1zM457 795h19v1h-19zM497 795h23v1h-23zM456 794h3v3h-3zM518 794h3v3h-3zM485 829h1v7h-1zM485 857h1v13h-1zM479 869h14v1h-14zM479 869h1v1h-1zM480 870h1v1h-1zM481 871h1v1h-1zM482 872h1v1h-1zM482 873h1v1h-1zM483 874h1v1h-1zM484 875h1v1h-1zM485 876h1v1h-1zM492 869h1v1h-1zM491 870h1v1h-1zM490 871h1v1h-1zM489 872h1v1h-1zM488 873h1v1h-1zM487 874h1v1h-1zM486 875h1v1h-1zM485 876h1v1h-1zM457 852h18v1h-18zM457 852h1v54h-1zM496 846h71v1h-71zM518 845h3v3h-3zM406 891h8v1h-8zM440 891h103v1h-103zM456 890h3v3h-3zM507 890h3v3h-3zM457 891h1v13h-1zM457 931h1v12h-1zM451 942h14v1h-14zM451 942h1v1h-1zM452 943h1v1h-1zM453 944h1v1h-1zM454 945h1v1h-1zM454 946h1v1h-1zM455 947h1v1h-1zM456 948h1v1h-1zM457 949h1v1h-1zM464 942h1v1h-1zM463 943h1v1h-1zM462 944h1v1h-1zM461 945h1v1h-1zM460 946h1v1h-1zM459 947h1v1h-1zM458 948h1v1h-1zM457 949h1v1h-1zM508 891h1v14h-1zM508 925h1v18h-1zM502 942h14v1h-14zM502 942h1v1h-1zM503 943h1v1h-1zM504 944h1v1h-1zM505 945h1v1h-1zM505 946h1v1h-1zM506 947h1v1h-1zM507 948h1v1h-1zM508 949h1v1h-1zM515 942h1v1h-1zM514 943h1v1h-1zM513 944h1v1h-1zM512 945h1v1h-1zM511 946h1v1h-1zM510 947h1v1h-1zM509 948h1v1h-1zM508 949h1v1h-1zM593 846h46v1h-46zM626 845h3v3h-3zM627 755h1v92h-1zM678 755h1v98h-1zM627 755h13v1h-13zM666 755h13v1h-13zM627 795h13v1h-13zM661 795h18v1h-18zM626 794h3v3h-3zM677 794h3v3h-3zM650 835h1v7h-1zM650 863h1v12h-1zM644 874h14v1h-14zM644 874h1v1h-1zM645 875h1v1h-1zM646 876h1v1h-1zM647 877h1v1h-1zM647 878h1v1h-1zM648 879h1v1h-1zM649 880h1v1h-1zM650 881h1v1h-1zM657 874h1v1h-1zM656 875h1v1h-1zM655 876h1v1h-1zM654 877h1v1h-1zM653 878h1v1h-1zM652 879h1v1h-1zM651 880h1v1h-1zM650 881h1v1h-1zM627 857h12v1h-12zM627 857h1v31h-1zM661 852h64v1h-64zM677 851h3v3h-3zM746 852h27v1h-27zM799 852h33v1h-33zM813 851h3v3h-3zM814 767h1v86h-1zM876 767h1v91h-1zM814 767h20v1h-20zM860 767h17v1h-17zM814 806h19v1h-19zM854 806h23v1h-23zM813 805h3v3h-3zM875 805h3v3h-3zM842 841h1v7h-1zM842 869h1v12h-1zM836 880h14v1h-14zM836 880h1v1h-1zM837 881h1v1h-1zM838 882h1v1h-1zM839 883h1v1h-1zM839 884h1v1h-1zM840 885h1v1h-1zM841 886h1v1h-1zM842 887h1v1h-1zM849 880h1v1h-1zM848 881h1v1h-1zM847 882h1v1h-1zM846 883h1v1h-1zM845 884h1v1h-1zM844 885h1v1h-1zM843 886h1v1h-1zM842 887h1v1h-1zM814 863h18v1h-18zM814 863h1v29h-1zM854 857h57v1h-57zM875 856h3v3h-3z"/>
<circle cx="508.0" cy="565" r="11" fill="none" stroke="#000080" stroke-width="1" clip-path="url(#cvclip)"/>
<text x="471" y="583.1999999999999" font-size="8" font-weight="bold" fill="#000000" textLength="3.8" lengthAdjust="spacingAndGlyphs" shape-rendering="geometricPrecision">5</text>
<text x="517" y="603.3" font-size="8" font-weight="bold" fill="#000000" textLength="9" lengthAdjust="spacingAndGlyphs" shape-rendering="geometricPrecision">0V</text>
<text x="517" y="612.0" font-size="8" font-weight="bold" fill="#000000" textLength="29.4" lengthAdjust="spacingAndGlyphs" shape-rendering="geometricPrecision">AC 5m 0</text>
<text x="465" y="635.0" font-size="8" font-weight="bold" fill="#000000" textLength="37.2" lengthAdjust="spacingAndGlyphs" shape-rendering="geometricPrecision">;tran 400m</text>
<text x="467.5" y="659.0" font-size="8" font-weight="bold" fill="#000000" textLength="68.8" lengthAdjust="spacingAndGlyphs" shape-rendering="geometricPrecision">.ac dec 1000 0.5 100</text>
<text x="672" y="661.6" font-size="9" font-weight="bold" fill="#000000" textLength="11.6" lengthAdjust="spacingAndGlyphs" shape-rendering="geometricPrecision">Vin</text>
<text x="0" y="0" transform="translate(816.3,710.5) rotate(-90)" font-size="9" font-weight="bold" fill="#000000" textLength="10.5" lengthAdjust="spacingAndGlyphs" shape-rendering="geometricPrecision">VG</text>
<text x="0" y="0" transform="translate(844.7,648.5) rotate(-90)" font-size="9" font-weight="bold" fill="#000000" textLength="8.5" lengthAdjust="spacingAndGlyphs" shape-rendering="geometricPrecision">V+</text>
<text x="910.3" y="667.6999999999999" font-size="9" font-weight="bold" fill="#000000" textLength="21.5" lengthAdjust="spacingAndGlyphs" shape-rendering="geometricPrecision">Vout1</text>
<text x="849" y="655.4" font-size="9" font-weight="bold" fill="#000000" textLength="9" lengthAdjust="spacingAndGlyphs" shape-rendering="geometricPrecision">U1</text>
<text x="849" y="678.9" font-size="9" font-weight="bold" fill="#000000" textLength="30.5" lengthAdjust="spacingAndGlyphs" shape-rendering="geometricPrecision">LTC6240</text>
<text x="840.5" y="565.4" font-size="9" font-weight="bold" fill="#000000" textLength="8.7" lengthAdjust="spacingAndGlyphs" shape-rendering="geometricPrecision">R2</text>
<text x="834.5" y="586.9" font-size="9" font-weight="bold" fill="#000000" textLength="20.8" lengthAdjust="spacingAndGlyphs" shape-rendering="geometricPrecision">1MEG</text>
<text x="836.7" y="605.4" font-size="9" font-weight="bold" fill="#000000" textLength="9.8" lengthAdjust="spacingAndGlyphs" shape-rendering="geometricPrecision">C2</text>
<text x="835.8" y="625.6999999999999" font-size="9" font-weight="bold" fill="#000000" textLength="12.5" lengthAdjust="spacingAndGlyphs" shape-rendering="geometricPrecision">22n</text>
<text x="730" y="650.4" font-size="9" font-weight="bold" fill="#000000" textLength="9.4" lengthAdjust="spacingAndGlyphs" shape-rendering="geometricPrecision">C1</text>
<text x="727" y="671.4" font-size="9" font-weight="bold" fill="#000000" textLength="16.2" lengthAdjust="spacingAndGlyphs" shape-rendering="geometricPrecision">470n</text>
<text x="778.7" y="650.4" font-size="9" font-weight="bold" fill="#000000" textLength="9.3" lengthAdjust="spacingAndGlyphs" shape-rendering="geometricPrecision">R1</text>
<text x="775.6" y="671.6999999999999" font-size="9" font-weight="bold" fill="#000000" textLength="14.4" lengthAdjust="spacingAndGlyphs" shape-rendering="geometricPrecision">47K</text>
<text x="337.1" y="842.4" font-size="9" font-weight="bold" fill="#000000" textLength="11.3" lengthAdjust="spacingAndGlyphs" shape-rendering="geometricPrecision">Vin</text>
<text x="372.7" y="832.1999999999999" font-size="9" font-weight="bold" fill="#000000" textLength="10.3" lengthAdjust="spacingAndGlyphs" shape-rendering="geometricPrecision">C4</text>
<text x="370" y="852.4" font-size="9" font-weight="bold" fill="#000000" textLength="16.3" lengthAdjust="spacingAndGlyphs" shape-rendering="geometricPrecision">470n</text>
<text x="421.7" y="832.1999999999999" font-size="9" font-weight="bold" fill="#000000" textLength="8.4" lengthAdjust="spacingAndGlyphs" shape-rendering="geometricPrecision">R5</text>
<text x="419.2" y="852.4" font-size="9" font-weight="bold" fill="#000000" textLength="13.6" lengthAdjust="spacingAndGlyphs" shape-rendering="geometricPrecision">47K</text>
<text x="484" y="747.6999999999999" font-size="9" font-weight="bold" fill="#000000" textLength="8.5" lengthAdjust="spacingAndGlyphs" shape-rendering="geometricPrecision">R6</text>
<text x="479" y="767.6999999999999" font-size="9" font-weight="bold" fill="#000000" textLength="17.5" lengthAdjust="spacingAndGlyphs" shape-rendering="geometricPrecision">470K</text>
<text x="479.8" y="786.1999999999999" font-size="9" font-weight="bold" fill="#000000" textLength="9.4" lengthAdjust="spacingAndGlyphs" shape-rendering="geometricPrecision">C5</text>
<text x="477.8" y="807.4" font-size="9" font-weight="bold" fill="#000000" textLength="15.5" lengthAdjust="spacingAndGlyphs" shape-rendering="geometricPrecision">100n</text>
<text x="0" y="0" transform="translate(487.3,829.2) rotate(-90)" font-size="9" font-weight="bold" fill="#000000" textLength="8.5" lengthAdjust="spacingAndGlyphs" shape-rendering="geometricPrecision">V+</text>
<text x="491.7" y="837.6" font-size="9" font-weight="bold" fill="#000000" textLength="8.6" lengthAdjust="spacingAndGlyphs" shape-rendering="geometricPrecision">U2</text>
<text x="491.7" y="859.4" font-size="9" font-weight="bold" fill="#000000" textLength="30.5" lengthAdjust="spacingAndGlyphs" shape-rendering="geometricPrecision">LTC6240</text>
<text x="395.6" y="893.4" font-size="9" font-weight="bold" fill="#000000" textLength="8.8" lengthAdjust="spacingAndGlyphs" shape-rendering="geometricPrecision">V+</text>
<text x="421.7" y="883.6" font-size="9" font-weight="bold" fill="#000000" textLength="8.3" lengthAdjust="spacingAndGlyphs" shape-rendering="geometricPrecision">R7</text>
<text x="419.2" y="903.1999999999999" font-size="9" font-weight="bold" fill="#000000" textLength="13.6" lengthAdjust="spacingAndGlyphs" shape-rendering="geometricPrecision">47K</text>
<text x="542.6" y="893.4" font-size="9" font-weight="bold" fill="#000000" textLength="9.4" lengthAdjust="spacingAndGlyphs" shape-rendering="geometricPrecision">VG</text>
<text x="464.6" y="913.6" font-size="9" font-weight="bold" fill="#000000" textLength="8.7" lengthAdjust="spacingAndGlyphs" shape-rendering="geometricPrecision">R8</text>
<text x="463.9" y="926.6" font-size="9" font-weight="bold" fill="#000000" textLength="13.6" lengthAdjust="spacingAndGlyphs" shape-rendering="geometricPrecision">47K</text>
<text x="510.8" y="908.4" font-size="9" font-weight="bold" fill="#000000" textLength="9.3" lengthAdjust="spacingAndGlyphs" shape-rendering="geometricPrecision">C6</text>
<text x="511.7" y="925.6999999999999" font-size="9" font-weight="bold" fill="#000000" textLength="15.5" lengthAdjust="spacingAndGlyphs" shape-rendering="geometricPrecision">100n</text>
<text x="574.6" y="837.6" font-size="9" font-weight="bold" fill="#000000" textLength="8.8" lengthAdjust="spacingAndGlyphs" shape-rendering="geometricPrecision">R9</text>
<text x="573" y="858.4" font-size="9" font-weight="bold" fill="#000000" textLength="13.1" lengthAdjust="spacingAndGlyphs" shape-rendering="geometricPrecision">10K</text>
<text x="648.6" y="747.6" font-size="9" font-weight="bold" fill="#000000" textLength="8.8" lengthAdjust="spacingAndGlyphs" shape-rendering="geometricPrecision">R3</text>
<text x="644.8" y="767.4" font-size="9" font-weight="bold" fill="#000000" textLength="17" lengthAdjust="spacingAndGlyphs" shape-rendering="geometricPrecision">160K</text>
<text x="644.8" y="786.6" font-size="9" font-weight="bold" fill="#000000" textLength="9.2" lengthAdjust="spacingAndGlyphs" shape-rendering="geometricPrecision">C3</text>
<text x="643.7" y="807.4" font-size="9" font-weight="bold" fill="#000000" textLength="12.6" lengthAdjust="spacingAndGlyphs" shape-rendering="geometricPrecision">33n</text>
<text x="0" y="0" transform="translate(629.3,897.5) rotate(-90)" font-size="9" font-weight="bold" fill="#000000" textLength="10.5" lengthAdjust="spacingAndGlyphs" shape-rendering="geometricPrecision">VG</text>
<text x="0" y="0" transform="translate(652.3,835.2) rotate(-90)" font-size="9" font-weight="bold" fill="#000000" textLength="8.2" lengthAdjust="spacingAndGlyphs" shape-rendering="geometricPrecision">V+</text>
<text x="655.6" y="842.6" font-size="9" font-weight="bold" fill="#000000" textLength="8.7" lengthAdjust="spacingAndGlyphs" shape-rendering="geometricPrecision">U3</text>
<text x="655.6" y="865.6" font-size="9" font-weight="bold" fill="#000000" textLength="30.6" lengthAdjust="spacingAndGlyphs" shape-rendering="geometricPrecision">LTC6240</text>
<text x="730" y="843.4" font-size="9" font-weight="bold" fill="#000000" textLength="9.3" lengthAdjust="spacingAndGlyphs" shape-rendering="geometricPrecision">C7</text>
<text x="727.2" y="863.4" font-size="9" font-weight="bold" fill="#000000" textLength="15.8" lengthAdjust="spacingAndGlyphs" shape-rendering="geometricPrecision">470n</text>
<text x="778.3" y="843.4" font-size="9" font-weight="bold" fill="#000000" textLength="9.8" lengthAdjust="spacingAndGlyphs" shape-rendering="geometricPrecision">R4</text>
<text x="775.5" y="863.6" font-size="9" font-weight="bold" fill="#000000" textLength="14.3" lengthAdjust="spacingAndGlyphs" shape-rendering="geometricPrecision">47K</text>
<text x="838.6" y="758.6" font-size="9" font-weight="bold" fill="#000000" textLength="12.8" lengthAdjust="spacingAndGlyphs" shape-rendering="geometricPrecision">R10</text>
<text x="835" y="778.4" font-size="9" font-weight="bold" fill="#000000" textLength="20.2" lengthAdjust="spacingAndGlyphs" shape-rendering="geometricPrecision">1MEG</text>
<text x="837.1" y="798.8" font-size="9" font-weight="bold" fill="#000000" textLength="9.3" lengthAdjust="spacingAndGlyphs" shape-rendering="geometricPrecision">C8</text>
<text x="836" y="818.6" font-size="9" font-weight="bold" fill="#000000" textLength="12.3" lengthAdjust="spacingAndGlyphs" shape-rendering="geometricPrecision">22n</text>
<text x="0" y="0" transform="translate(816.3,902) rotate(-90)" font-size="9" font-weight="bold" fill="#000000" textLength="10.5" lengthAdjust="spacingAndGlyphs" shape-rendering="geometricPrecision">VG</text>
<text x="0" y="0" transform="translate(844.7,840) rotate(-90)" font-size="9" font-weight="bold" fill="#000000" textLength="7.8" lengthAdjust="spacingAndGlyphs" shape-rendering="geometricPrecision">V+</text>
<text x="848.6" y="848.6" font-size="9" font-weight="bold" fill="#000000" textLength="9.9" lengthAdjust="spacingAndGlyphs" shape-rendering="geometricPrecision">U4</text>
<text x="848.6" y="871.8" font-size="9" font-weight="bold" fill="#000000" textLength="30.7" lengthAdjust="spacingAndGlyphs" shape-rendering="geometricPrecision">LTC6240</text>
<text x="910.5" y="859.6999999999999" font-size="9" font-weight="bold" fill="#000000" textLength="20.8" lengthAdjust="spacingAndGlyphs" shape-rendering="geometricPrecision">Vout2</text>
<rect x="1228" y="968" width="52" height="1" fill="#808080"/>
<rect x="1228" y="968" width="1" height="16" fill="#808080"/>
</svg></body></html>
